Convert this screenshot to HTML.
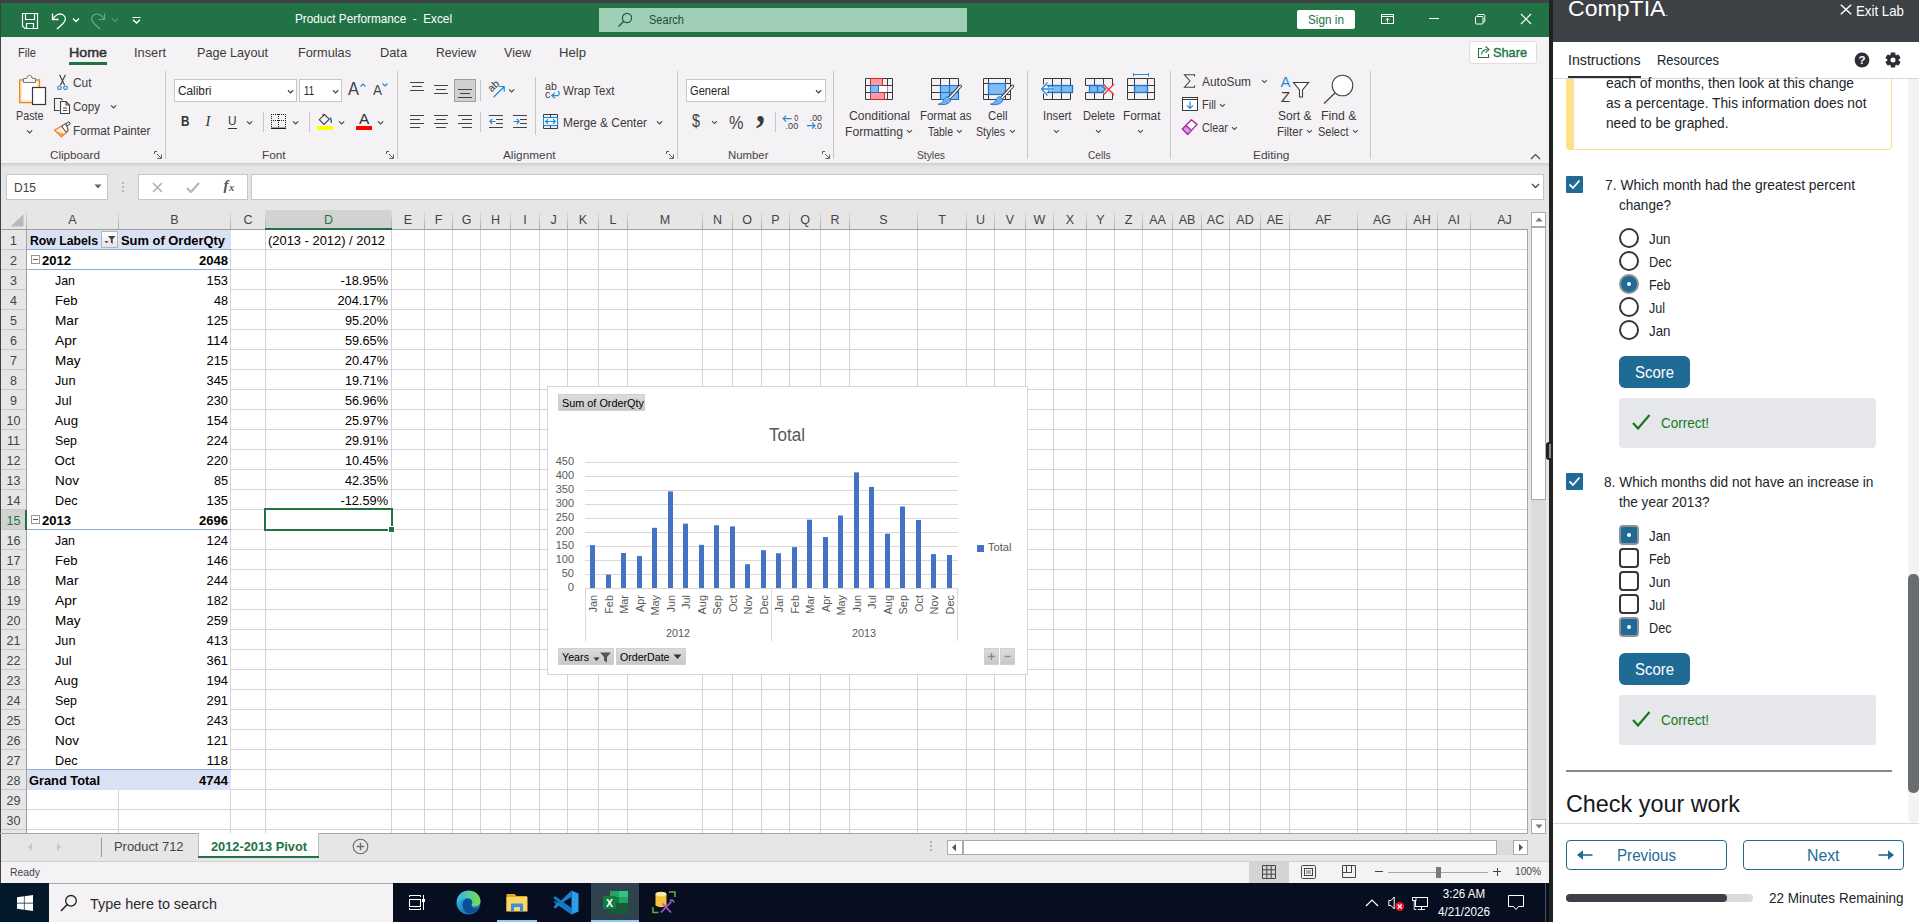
<!DOCTYPE html>
<html lang="en"><head><meta charset="utf-8"><title>Product Performance - Excel</title>
<style>
html,body{margin:0;padding:0;}
body{width:1919px;height:922px;overflow:hidden;background:#e6e6e6;position:relative;font-family:"Liberation Sans", sans-serif;}
.t{position:absolute;white-space:pre;line-height:1;font-family:"Liberation Sans", sans-serif;}
.b{position:absolute;box-sizing:border-box;display:block;}
svg text{font-family:"Liberation Sans", sans-serif;}
</style></head>
<body>
<div class="b" style="left:0px;top:0px;width:1553px;height:3px;background:#3f4245;"></div>
<div class="b" style="left:0px;top:3px;width:1px;height:880px;background:#3f4245;"></div>
<div class="b" style="left:1px;top:3px;width:1548px;height:34px;background:#217346;"></div>
<div class="b" style="left:1px;top:37px;width:1548px;height:126px;background:#f5f2f5;"></div>
<div class="b" style="left:1px;top:163px;width:1548px;height:5px;background:linear-gradient(#cfcdcf,#e2e1e2 60%,#e6e6e6);"></div>
<svg class="b" style="left:21px;top:12px;" width="18" height="18" viewBox="0 0 18 18"><path d="M1.5 1.5 H16.5 V16.5 H4 L1.5 14 Z M4.5 1.5 V7.5 H13.5 V1.5 M5.5 16.5 V11.5 H12.5 V16.5" fill="none" stroke="#ffffff" stroke-width="1.2"/></svg>
<svg class="b" style="left:50px;top:11px;" width="18" height="20" viewBox="0 0 18 20"><path d="M2.5 2.5 V8.5 H8.5 M2.8 8.2 C5 4 9 2 12.5 3.5 C16 5.5 16.5 9 13 12.5 L7 18" fill="none" stroke="#ffffff" stroke-width="1.3"/></svg>
<svg class="b" style="left:71.5px;top:16.5px;" width="8" height="6" viewBox="0 0 8 6"><path d="M1 1.5 L4 4.5 L7 1.5" fill="none" stroke="#ffffff" stroke-width="1.3"/></svg>
<svg class="b" style="left:89px;top:11px;" width="18" height="20" viewBox="0 0 18 20"><path d="M15.5 2.5 V8.5 H9.5 M15.2 8.2 C13 4 9 2 5.5 3.5 C2 5.5 1.5 9 5 12.5 L11 18" fill="none" stroke="#6fa888" stroke-width="1.2"/></svg>
<svg class="b" style="left:110.5px;top:16.5px;" width="8" height="6" viewBox="0 0 8 6"><path d="M1 1.5 L4 4.5 L7 1.5" fill="none" stroke="#5d9b78" stroke-width="1.1"/></svg>
<svg class="b" style="left:132px;top:16px;" width="9" height="8" viewBox="0 0 9 8"><path d="M0.5 1.5 H8.5" stroke="#ffffff" stroke-width="1"/><path d="M1 3.8 L4.5 7 L8 3.8" fill="none" stroke="#ffffff" stroke-width="1.4"/></svg>
<span class="t" id="t1" style="left:295.00px;top:11.90px;font-size:13px;color:#fff;transform:scaleX(0.9054);transform-origin:left center;">Product Performance  -  Excel</span>
<div class="b" style="left:599px;top:8px;width:368px;height:24px;background:#9fd0b7;"></div>
<svg class="b" style="left:617px;top:12px;" width="16" height="16" viewBox="0 0 16 16"><circle cx="10" cy="6" r="4.6" fill="none" stroke="#1e5c3a" stroke-width="1.2"/><path d="M6.8 9.2 L1.5 14.5" stroke="#1e5c3a" stroke-width="1.3"/></svg>
<span class="t" id="t2" style="left:649.00px;top:13.84px;font-size:12px;color:#1e4d33;transform:scaleX(0.9203);transform-origin:left center;">Search</span>
<div class="b" style="left:1297px;top:10px;width:58px;height:19px;background:#fff;border-radius:2px;"></div>
<span class="t" id="t3" style="left:1308.00px;top:13.20px;font-size:13px;color:#217346;transform:scaleX(0.9057);transform-origin:left center;">Sign in</span>
<svg class="b" style="left:1381px;top:14px;" width="14" height="11" viewBox="0 0 14 11"><rect x="0.5" y="0.5" width="12" height="9" fill="none" stroke="#fff" stroke-width="1"/><path d="M0.5 2.5 H12.5" stroke="#fff" stroke-width="1"/><path d="M6.5 8.5 V4.5 M4.5 6.3 L6.5 4.3 L8.5 6.3" fill="none" stroke="#fff" stroke-width="1"/></svg>
<div class="b" style="left:1429px;top:18px;width:10px;height:1px;background:#fff;"></div>
<svg class="b" style="left:1475px;top:14px;" width="11" height="11" viewBox="0 0 11 11"><rect x="0.5" y="2.5" width="7.5" height="7.5" rx="1" fill="none" stroke="#fff"/><path d="M2.5 2.5 V1.5 Q2.5 0.5 3.5 0.5 H8.8 Q9.8 0.5 9.8 1.5 V7 Q9.8 8 8.8 8 H8" fill="none" stroke="#fff"/></svg>
<svg class="b" style="left:1520px;top:13px;" width="12" height="12" viewBox="0 0 12 12"><path d="M1 1 L11 11 M11 1 L1 11" stroke="#fff" stroke-width="1.2"/></svg>
<span class="t" id="t4" style="left:18.00px;top:45.94px;font-size:13.3px;color:#3b3a39;transform:scaleX(0.8397);transform-origin:left center;">File</span>
<span class="t" id="t5" style="left:69.00px;top:45.94px;font-size:13.3px;color:#323130;transform:scaleX(1.0709);transform-origin:left center;-webkit-text-stroke:0.45px #323130;">Home</span>
<span class="t" id="t6" style="left:134.00px;top:45.94px;font-size:13.3px;color:#3b3a39;transform:scaleX(0.9620);transform-origin:left center;">Insert</span>
<span class="t" id="t7" style="left:197.00px;top:45.94px;font-size:13.3px;color:#3b3a39;transform:scaleX(0.9508);transform-origin:left center;">Page Layout</span>
<span class="t" id="t8" style="left:298.00px;top:45.94px;font-size:13.3px;color:#3b3a39;transform:scaleX(0.9563);transform-origin:left center;">Formulas</span>
<span class="t" id="t9" style="left:380.00px;top:45.94px;font-size:13.3px;color:#3b3a39;transform:scaleX(0.9611);transform-origin:left center;">Data</span>
<span class="t" id="t10" style="left:436.00px;top:45.94px;font-size:13.3px;color:#3b3a39;transform:scaleX(0.9172);transform-origin:left center;">Review</span>
<span class="t" id="t11" style="left:504.00px;top:45.94px;font-size:13.3px;color:#3b3a39;transform:scaleX(0.9443);transform-origin:left center;">View</span>
<span class="t" id="t12" style="left:559.00px;top:45.94px;font-size:13.3px;color:#3b3a39;transform:scaleX(0.9869);transform-origin:left center;">Help</span>
<div class="b" style="left:69px;top:62px;width:38px;height:3px;background:#217346;"></div>
<div class="b" style="left:1469px;top:40.5px;width:68px;height:23px;background:#fff;border:1px solid #e3dbdf;border-radius:3px;"></div>
<svg class="b" style="left:1477px;top:45px;" width="14" height="14" viewBox="0 0 14 14"><path d="M5 3.5 H1.5 V12.5 H11.5 V9" fill="none" stroke="#217346" stroke-width="1.1"/><path d="M4.5 9.5 C5 6 8 4.5 10.5 4.5 M8.5 1.5 L12 4.6 L8.5 7.5" fill="none" stroke="#217346" stroke-width="1.1"/></svg>
<span class="t" id="t13" style="left:1493.00px;top:45.74px;font-size:13.3px;color:#217346;transform:scaleX(0.9582);transform-origin:left center;-webkit-text-stroke:0.4px #217346;">Share</span>
<svg class="b" style="left:1530px;top:153px;" width="11" height="7" viewBox="0 0 11 7"><path d="M1 6 L5.5 1.5 L10 6" fill="none" stroke="#444" stroke-width="1.2"/></svg>
<div class="b" style="left:6px;top:174px;width:102px;height:26px;background:#fff;border:1px solid #c6c6c6;"></div>
<span class="t" id="t14" style="left:13.50px;top:181.72px;font-size:12.5px;color:#444;transform:scaleX(0.9591);transform-origin:left center;">D15</span>
<svg class="b" style="left:94px;top:184px;" width="8" height="5" viewBox="0 0 8 5"><path d="M0.5 0.5 H7.5 L4 4.5 Z" fill="#666"/></svg>
<div class="b" style="left:122px;top:181.7px;width:2px;height:2px;background:#a6a6a6;border-radius:1px;"></div>
<div class="b" style="left:122px;top:185.9px;width:2px;height:2px;background:#a6a6a6;border-radius:1px;"></div>
<div class="b" style="left:122px;top:190.2px;width:2px;height:2px;background:#a6a6a6;border-radius:1px;"></div>
<div class="b" style="left:138px;top:174px;width:110px;height:26px;background:#fff;border:1px solid #c6c6c6;"></div>
<svg class="b" style="left:152px;top:182px;" width="11" height="11" viewBox="0 0 11 11"><path d="M1 1 L10 10 M10 1 L1 10" stroke="#b0b0b0" stroke-width="1.6"/></svg>
<svg class="b" style="left:186px;top:182px;" width="14" height="11" viewBox="0 0 14 11"><path d="M1 6 L5 10 L13 1" fill="none" stroke="#b3b3b3" stroke-width="2.1"/></svg>
<span class="t" id="t15" style="left:223.50px;top:178.30px;font-size:15px;color:#555;font-weight:700;font-style:italic;font-family:'Liberation Serif',serif;">f</span>
<span class="t" id="t16" style="left:229.00px;top:182.61px;font-size:10.5px;color:#555;font-weight:700;font-style:italic;font-family:'Liberation Serif',serif;">x</span>
<div class="b" style="left:251px;top:174px;width:1293px;height:26px;background:#fff;border:1px solid #c6c6c6;"></div>
<svg class="b" style="left:1531px;top:183px;" width="9" height="6" viewBox="0 0 9 6"><path d="M1 1 L4.5 4.5 L8 1" fill="none" stroke="#555" stroke-width="1.5"/></svg>
<div class="b" style="left:165px;top:71px;width:1px;height:88px;background:#c8c6c4;"></div>
<div class="b" style="left:397px;top:71px;width:1px;height:88px;background:#c8c6c4;"></div>
<div class="b" style="left:677px;top:71px;width:1px;height:88px;background:#c8c6c4;"></div>
<div class="b" style="left:833px;top:71px;width:1px;height:88px;background:#c8c6c4;"></div>
<div class="b" style="left:1027px;top:71px;width:1px;height:88px;background:#c8c6c4;"></div>
<div class="b" style="left:1170px;top:71px;width:1px;height:88px;background:#c8c6c4;"></div>
<div class="b" style="left:1370px;top:71px;width:1px;height:88px;background:#c8c6c4;"></div>
<svg class="b" style="left:18px;top:74px;" width="30" height="32" viewBox="0 0 30 32"><rect x="1.8" y="6" width="19.5" height="22.5" fill="#fff" stroke="#ea8b1e" stroke-width="1.6"/><rect x="3.2" y="7.4" width="16.7" height="19.7" fill="none" stroke="#fde3b3" stroke-width="1.3"/><path d="M5.5 8.5 V4.5 H8.6 Q9 1.3 11.5 1.3 Q14 1.3 14.4 4.5 H17.5 V8.5 Z" fill="#f7f4f7" stroke="#797775" stroke-width="1"/><rect x="14.5" y="13.5" width="13" height="17" fill="#fff" stroke="#3b3a39" stroke-width="1.2"/></svg>
<span class="t" id="t17" style="left:16.10px;top:110.04px;font-size:12px;color:#3b3a39;transform:scaleX(0.8961);transform-origin:left center;">Paste</span>
<svg class="b" style="left:25.9px;top:128.9px;" width="7.2" height="5.2" viewBox="0 0 7.2 5.2"><path d="M1 1.3 L3.6 3.9 L6.2 1.3" fill="none" stroke="#444" stroke-width="1.1"/></svg>
<svg class="b" style="left:57px;top:74px;" width="11" height="17" viewBox="0 0 11 17"><path d="M2.6 0.8 L7.6 11.2 M8.4 0.8 L3.4 11.2" stroke="#3b3a39" stroke-width="1.1" fill="none"/><circle cx="2.5" cy="13.8" r="1.8" fill="none" stroke="#1e8bd8" stroke-width="1.2"/><circle cx="8.5" cy="13.8" r="1.8" fill="none" stroke="#1e8bd8" stroke-width="1.2"/></svg>
<span class="t" id="t18" style="left:72.80px;top:76.54px;font-size:12px;color:#3b3a39;transform:scaleX(0.9900);transform-origin:left center;">Cut</span>
<svg class="b" style="left:53px;top:97px;" width="18" height="18" viewBox="0 0 18 18"><path d="M6.5 13.5 H1.5 V1.5 H8 L9.5 3" fill="none" stroke="#444" stroke-width="1.1"/><path d="M7.5 4.5 H13 L16.5 8 V16.5 H7.5 Z M13 4.5 V8 H16.5" fill="#fff" stroke="#444" stroke-width="1.1"/><path d="M10 11 H14 M10 13.5 H14" stroke="#444" stroke-width="1"/></svg>
<span class="t" id="t19" style="left:72.80px;top:100.84px;font-size:12px;color:#3b3a39;transform:scaleX(0.9637);transform-origin:left center;">Copy</span>
<svg class="b" style="left:110.4px;top:103.9px;" width="7.2" height="5.2" viewBox="0 0 7.2 5.2"><path d="M1 1.3 L3.6 3.9 L6.2 1.3" fill="none" stroke="#444" stroke-width="1.1"/></svg>
<svg class="b" style="left:53px;top:121px;" width="19" height="18" viewBox="0 0 19 18"><path d="M1.5 9 L9 5 L14 11 L8.3 15.8 Z" fill="#fdebd6" stroke="#e8792d" stroke-width="1.2" stroke-linejoin="round"/><path d="M4.5 10.8 L11.3 12.8 L8.3 15.2 Z" fill="#f5a04a"/><path d="M8.5 5 L13 2.5 L15.3 9.5 L13 11 Z" fill="#fff" stroke="#3b3a39" stroke-width="1" stroke-linejoin="round"/><path d="M12.5 2.8 L16 0.8 L17.3 2.7 L14 4.8 Z" fill="#fff" stroke="#3b3a39" stroke-width="1" stroke-linejoin="round"/></svg>
<span class="t" id="t20" style="left:72.80px;top:124.64px;font-size:12px;color:#3b3a39;transform:scaleX(0.9766);transform-origin:left center;">Format Painter</span>
<span class="t" id="t21" style="left:49.50px;top:149.83px;font-size:11.3px;color:#444;transform:scaleX(1.0339);transform-origin:left center;">Clipboard</span>
<svg class="b" style="left:154px;top:151px;" width="8" height="8" viewBox="0 0 8 8"><path d="M0.5 3 V0.5 H3 M7.5 3.5 V7.5 H3.5 M3 3 L7 7" fill="none" stroke="#605e5c" stroke-width="1"/></svg>
<div class="b" style="left:174px;top:79px;width:123px;height:23px;background:#fff;border:1px solid #c8c6c4;"></div>
<div class="b" style="left:299px;top:79px;width:43px;height:23px;background:#fff;border:1px solid #c8c6c4;"></div>
<span class="t" id="t22" style="left:177.50px;top:85.02px;font-size:12.5px;color:#262626;transform:scaleX(0.9453);transform-origin:left center;">Calibri</span>
<span class="t" id="t23" style="left:303.50px;top:85.02px;font-size:12.5px;color:#262626;transform:scaleX(0.7702);transform-origin:left center;">11</span>
<svg class="b" style="left:286.9px;top:88.9px;" width="7.2" height="5.2" viewBox="0 0 7.2 5.2"><path d="M1 1.3 L3.6 3.9 L6.2 1.3" fill="none" stroke="#444" stroke-width="1.2"/></svg>
<svg class="b" style="left:331.9px;top:88.9px;" width="7.2" height="5.2" viewBox="0 0 7.2 5.2"><path d="M1 1.3 L3.6 3.9 L6.2 1.3" fill="none" stroke="#444" stroke-width="1.2"/></svg>
<span class="t" id="t24" style="left:348.00px;top:80.26px;font-size:18px;color:#444;transform:scaleX(0.9155);transform-origin:left center;">A</span>
<svg class="b" style="left:359.5px;top:83px;" width="6" height="4" viewBox="0 0 6 4"><path d="M0.5 3.5 L3 1 L5.5 3.5" fill="none" stroke="#1e8bd8" stroke-width="1.1"/></svg>
<span class="t" id="t25" style="left:373.00px;top:83.23px;font-size:14.5px;color:#444;transform:scaleX(0.9305);transform-origin:left center;">A</span>
<svg class="b" style="left:381.5px;top:83px;" width="6" height="4" viewBox="0 0 6 4"><path d="M0.5 0.5 L3 3 L5.5 0.5" fill="none" stroke="#1e8bd8" stroke-width="1.1"/></svg>
<span class="t" id="t26" style="left:181.00px;top:114.23px;font-size:14.5px;color:#323130;font-weight:700;transform:scaleX(0.8107);transform-origin:left center;">B</span>
<span class="t" id="t27" style="left:205.50px;top:114.23px;font-size:14.5px;color:#323130;font-style:italic;font-family:'Liberation Serif',serif;">I</span>
<span class="t" id="t28" style="left:228.00px;top:114.07px;font-size:13.5px;color:#323130;transform:scaleX(0.8718);transform-origin:left center;">U</span>
<div class="b" style="left:228px;top:127.5px;width:9px;height:1px;background:#323130;"></div>
<svg class="b" style="left:246.4px;top:119.9px;" width="7.2" height="5.2" viewBox="0 0 7.2 5.2"><path d="M1 1.3 L3.6 3.9 L6.2 1.3" fill="none" stroke="#444" stroke-width="1.1"/></svg>
<div class="b" style="left:263px;top:112px;width:1px;height:20px;background:#c8c6c4;"></div>
<svg class="b" style="left:271px;top:114px;" width="16" height="16" viewBox="0 0 16 16"><path d="M0 0.5 H15 M0.5 0 V13 M14.5 0 V13 M7.5 0 V13 M0 6.5 H15" stroke="#1b1b1b" stroke-width="1" stroke-dasharray="1 1" fill="none"/><path d="M0 14.3 H15" stroke="#111" stroke-width="1.3"/></svg>
<svg class="b" style="left:292.4px;top:119.9px;" width="7.2" height="5.2" viewBox="0 0 7.2 5.2"><path d="M1 1.3 L3.6 3.9 L6.2 1.3" fill="none" stroke="#444" stroke-width="1.1"/></svg>
<div class="b" style="left:309px;top:112px;width:1px;height:20px;background:#c8c6c4;"></div>
<svg class="b" style="left:317px;top:113px;" width="18" height="18" viewBox="0 0 18 18"><path d="M7.5 1.5 L12.2 6.2 L7 11.4 L2.3 6.7 Z M6 3 V0.8" fill="none" stroke="#444" stroke-width="1.1"/><path d="M12.8 4.5 Q15.3 7 14 10" fill="none" stroke="#1b6ec2" stroke-width="1.3"/><rect x="0" y="13" width="16" height="4" fill="#ffff00"/></svg>
<svg class="b" style="left:338.4px;top:119.9px;" width="7.2" height="5.2" viewBox="0 0 7.2 5.2"><path d="M1 1.3 L3.6 3.9 L6.2 1.3" fill="none" stroke="#444" stroke-width="1.1"/></svg>
<span class="t" id="t29" style="left:358.70px;top:112.23px;font-size:14.5px;color:#323130;transform:scaleX(1.0649);transform-origin:left center;">A</span>
<div class="b" style="left:356px;top:126px;width:16px;height:4px;background:#ff0000;"></div>
<svg class="b" style="left:377.4px;top:119.9px;" width="7.2" height="5.2" viewBox="0 0 7.2 5.2"><path d="M1 1.3 L3.6 3.9 L6.2 1.3" fill="none" stroke="#444" stroke-width="1.1"/></svg>
<span class="t" id="t30" style="left:261.50px;top:149.83px;font-size:11.3px;color:#444;transform:scaleX(1.0394);transform-origin:left center;">Font</span>
<svg class="b" style="left:386px;top:151px;" width="8" height="8" viewBox="0 0 8 8"><path d="M0.5 3 V0.5 H3 M7.5 3.5 V7.5 H3.5 M3 3 L7 7" fill="none" stroke="#605e5c" stroke-width="1"/></svg>
<div class="b" style="left:410px;top:82px;width:14px;height:1px;background:#444;"></div><div class="b" style="left:412px;top:86px;width:10px;height:1px;background:#444;"></div><div class="b" style="left:410px;top:90px;width:14px;height:1px;background:#444;"></div>
<div class="b" style="left:434px;top:85px;width:14px;height:1px;background:#444;"></div><div class="b" style="left:436px;top:89px;width:10px;height:1px;background:#444;"></div><div class="b" style="left:434px;top:93px;width:14px;height:1px;background:#444;"></div>
<div class="b" style="left:454px;top:79px;width:22px;height:23px;background:#d2d0ce;border:1px solid #a19f9d;"></div>
<div class="b" style="left:458px;top:89px;width:14px;height:1px;background:#444;"></div><div class="b" style="left:460px;top:93px;width:10px;height:1px;background:#444;"></div><div class="b" style="left:458px;top:97px;width:14px;height:1px;background:#444;"></div>
<div class="b" style="left:480px;top:80px;width:1px;height:21px;background:#c8c6c4;"></div>
<svg class="b" style="left:486px;top:79px;" width="20" height="20" viewBox="0 0 20 20"><text x="0" y="0" font-size="10.5" fill="#3b3a39" transform="translate(5.5 13.5) rotate(-42)">ab</text><path d="M7.5 18.2 L17.8 8 M13 7.5 H18.2 V12.7" fill="none" stroke="#1e8bd8" stroke-width="1.2"/></svg>
<svg class="b" style="left:507.9px;top:87.9px;" width="7.2" height="5.2" viewBox="0 0 7.2 5.2"><path d="M1 1.3 L3.6 3.9 L6.2 1.3" fill="none" stroke="#444" stroke-width="1.1"/></svg>
<div class="b" style="left:535px;top:77px;width:1px;height:58px;background:#c8c6c4;"></div>
<svg class="b" style="left:545px;top:80.7px;" width="16" height="19" viewBox="0 0 16 19"><text x="0" y="9" font-size="10.5" fill="#3b3a39" textLength="11.8" lengthAdjust="spacingAndGlyphs">ab</text><text x="0" y="16.8" font-size="10.5" fill="#3b3a39">c</text><path d="M13 10.3 Q15.5 12.5 13 14.6 H7 M9.8 12 L6.8 14.6 L9.8 17.2" fill="none" stroke="#1e8bd8" stroke-width="1.2"/></svg>
<span class="t" id="t31" style="left:562.50px;top:84.64px;font-size:12px;color:#3b3a39;transform:scaleX(0.9612);transform-origin:left center;">Wrap Text</span>
<div class="b" style="left:410px;top:115px;width:14px;height:1px;background:#444;"></div><div class="b" style="left:410px;top:119px;width:10px;height:1px;background:#444;"></div><div class="b" style="left:410px;top:123px;width:14px;height:1px;background:#444;"></div><div class="b" style="left:410px;top:127px;width:10px;height:1px;background:#444;"></div>
<div class="b" style="left:434px;top:115px;width:14px;height:1px;background:#444;"></div><div class="b" style="left:436px;top:119px;width:10px;height:1px;background:#444;"></div><div class="b" style="left:434px;top:123px;width:14px;height:1px;background:#444;"></div><div class="b" style="left:436px;top:127px;width:10px;height:1px;background:#444;"></div>
<div class="b" style="left:458px;top:115px;width:14px;height:1px;background:#444;"></div><div class="b" style="left:462px;top:119px;width:10px;height:1px;background:#444;"></div><div class="b" style="left:458px;top:123px;width:14px;height:1px;background:#444;"></div><div class="b" style="left:462px;top:127px;width:10px;height:1px;background:#444;"></div>
<div class="b" style="left:480px;top:112px;width:1px;height:20px;background:#c8c6c4;"></div>
<div class="b" style="left:489px;top:115px;width:14px;height:1px;background:#444;"></div><div class="b" style="left:496px;top:119px;width:7px;height:1px;background:#444;"></div><div class="b" style="left:496px;top:123px;width:7px;height:1px;background:#444;"></div><div class="b" style="left:489px;top:127px;width:14px;height:1px;background:#444;"></div>
<svg class="b" style="left:489px;top:118px;" width="7" height="7" viewBox="0 0 7 7"><path d="M6.5 3.5 H0.8 M3.2 1 L0.8 3.5 L3.2 6" fill="none" stroke="#1e8bd8" stroke-width="1.1"/></svg>
<div class="b" style="left:513px;top:115px;width:14px;height:1px;background:#444;"></div><div class="b" style="left:520px;top:119px;width:7px;height:1px;background:#444;"></div><div class="b" style="left:520px;top:123px;width:7px;height:1px;background:#444;"></div><div class="b" style="left:513px;top:127px;width:14px;height:1px;background:#444;"></div>
<svg class="b" style="left:513px;top:118px;" width="7" height="7" viewBox="0 0 7 7"><path d="M0.5 3.5 H6.2 M3.8 1 L6.2 3.5 L3.8 6" fill="none" stroke="#1e8bd8" stroke-width="1.1"/></svg>
<svg class="b" style="left:543px;top:114px;" width="16" height="16" viewBox="0 0 16 16"><path d="M0.5 0.5 H14.5 V14.5 H0.5 Z M7.5 0.5 V3.5 M7.5 11.5 V14.5" fill="none" stroke="#3b3a39" stroke-width="1"/><rect x="0.5" y="3.5" width="14" height="8" fill="#fff" stroke="#1e8bd8" stroke-width="1.2"/><path d="M2.7 7.5 H12.3 M5 5.2 L2.6 7.5 L5 9.8 M10 5.2 L12.4 7.5 L10 9.8" fill="none" stroke="#1e8bd8" stroke-width="1.2"/></svg>
<span class="t" id="t32" style="left:562.50px;top:117.14px;font-size:12px;color:#3b3a39;transform:scaleX(0.9917);transform-origin:left center;">Merge &amp; Center</span>
<svg class="b" style="left:656.4px;top:119.9px;" width="7.2" height="5.2" viewBox="0 0 7.2 5.2"><path d="M1 1.3 L3.6 3.9 L6.2 1.3" fill="none" stroke="#444" stroke-width="1.1"/></svg>
<span class="t" id="t33" style="left:503.00px;top:149.83px;font-size:11.3px;color:#444;transform:scaleX(1.0448);transform-origin:left center;">Alignment</span>
<svg class="b" style="left:666px;top:151px;" width="8" height="8" viewBox="0 0 8 8"><path d="M0.5 3 V0.5 H3 M7.5 3.5 V7.5 H3.5 M3 3 L7 7" fill="none" stroke="#605e5c" stroke-width="1"/></svg>
<div class="b" style="left:686px;top:79px;width:140px;height:23px;background:#fff;border:1px solid #c8c6c4;"></div>
<span class="t" id="t34" style="left:689.50px;top:85.02px;font-size:12.5px;color:#262626;transform:scaleX(0.8880);transform-origin:left center;">General</span>
<svg class="b" style="left:815.4px;top:88.9px;" width="7.2" height="5.2" viewBox="0 0 7.2 5.2"><path d="M1 1.3 L3.6 3.9 L6.2 1.3" fill="none" stroke="#444" stroke-width="1.2"/></svg>
<span class="t" id="t35" style="left:692.30px;top:112.26px;font-size:18.6px;color:#444;transform:scaleX(0.7734);transform-origin:left center;">$</span>
<svg class="b" style="left:710.6px;top:120.1px;" width="6.8" height="4.8" viewBox="0 0 6.8 4.8"><path d="M1 1.2 L3.4 3.6 L5.8 1.2" fill="none" stroke="#444" stroke-width="1.1"/></svg>
<span class="t" id="t36" style="left:728.50px;top:112.52px;font-size:19px;color:#444;transform:scaleX(0.8577);transform-origin:left center;">%</span>
<span class="t" id="t37" style="left:755.50px;top:89.14px;font-size:40px;color:#3b3a39;font-weight:700;transform:scaleX(0.9000);transform-origin:left center;font-family:'Liberation Serif',serif;">,</span>
<div class="b" style="left:775px;top:112px;width:1px;height:20px;background:#c8c6c4;"></div>
<svg class="b" style="left:782px;top:113px;" width="18" height="18" viewBox="0 0 18 18"><path d="M9.7 5.6 H1.2 M4.2 2.6 L1.2 5.6 L4.2 8.6" fill="none" stroke="#1e8bd8" stroke-width="1.2"/><text x="12.2" y="7.5" font-size="9.5" fill="#3b3a39" textLength="4" lengthAdjust="spacingAndGlyphs">0</text><text x="3.6" y="16.1" font-size="9.5" fill="#3b3a39" textLength="12.6" lengthAdjust="spacingAndGlyphs">.00</text></svg>
<svg class="b" style="left:806px;top:113px;" width="18" height="18" viewBox="0 0 18 18"><text x="3.8" y="7.5" font-size="9.5" fill="#3b3a39" textLength="12" lengthAdjust="spacingAndGlyphs">.00</text><path d="M1 12.7 H9 M6 9.7 L9 12.7 L6 15.7" fill="none" stroke="#1e8bd8" stroke-width="1.2"/><text x="8.6" y="16.1" font-size="9.5" fill="#3b3a39" textLength="7.3" lengthAdjust="spacingAndGlyphs">.0</text></svg>
<span class="t" id="t38" style="left:727.50px;top:149.83px;font-size:11.3px;color:#444;transform:scaleX(1.0078);transform-origin:left center;">Number</span>
<svg class="b" style="left:822px;top:151px;" width="8" height="8" viewBox="0 0 8 8"><path d="M0.5 3 V0.5 H3 M7.5 3.5 V7.5 H3.5 M3 3 L7 7" fill="none" stroke="#605e5c" stroke-width="1"/></svg>
<svg class="b" style="left:865px;top:78px;" width="29" height="23" viewBox="0 0 29 23"><path d="M0.5 0.5 H27.5 V21.5 H0.5 Z M0.5 7.5 H27.5 M0.5 14.5 H27.5 M22.5 0.5 V21.5" fill="none" stroke="#3b3a39" stroke-width="1"/><rect x="13.5" y="8" width="9" height="6" fill="#fff"/><rect x="5.5" y="0.5" width="12" height="7" fill="#fb9aa6" stroke="#e0261a" stroke-width="1"/><rect x="5.5" y="14.5" width="14" height="7" fill="#fb9aa6" stroke="#e0261a" stroke-width="1"/><rect x="5.5" y="7.5" width="8" height="7" fill="#7fbaf0" stroke="#1b75d0" stroke-width="1"/></svg>
<span class="t" id="t39" style="left:848.50px;top:110.24px;font-size:12px;color:#3b3a39;transform:scaleX(1.0159);transform-origin:left center;">Conditional</span>
<span class="t" id="t40" style="left:844.50px;top:125.84px;font-size:12px;color:#3b3a39;transform:scaleX(1.0112);transform-origin:left center;">Formatting</span>
<svg class="b" style="left:906.1px;top:129.1px;" width="6.8" height="4.8" viewBox="0 0 6.8 4.8"><path d="M1 1.2 L3.4 3.6 L5.8 1.2" fill="none" stroke="#444" stroke-width="1.1"/></svg>
<svg class="b" style="left:931px;top:78px;" width="34" height="29" viewBox="0 0 34 29"><rect x="9.5" y="7.5" width="18" height="14" fill="#7fbaf0"/><path d="M0.5 0.5 H27.5 V21.5 H0.5 Z M0.5 7.5 H27.5 M0.5 14.5 H27.5 M9.5 0.5 V21.5 M18.5 0.5 V21.5" fill="none" stroke="#3b3a39" stroke-width="1"/><path d="M9.5 21.5 V7.5 H27.5 M9.5 14.5 H27.5 M18.5 7.5 V21.5 M27.5 7.5 V21.5 M9.5 21.5 H27.5" fill="none" stroke="#1b75d0" stroke-width="1.2"/><path d="M29.3 8.2 L18.2 20.2" stroke="#3b3a39" stroke-width="3.4" stroke-linecap="round"/><path d="M29.3 8.2 L18.5 19.9" stroke="#fff" stroke-width="1.5" stroke-linecap="round"/><path d="M16.5 18.7 L19.8 21.8 C19.2 25.2 14.2 27.8 7.2 26.2 C10.2 25.8 12.2 23.6 12.6 21.8 C13.2 19.9 15.2 18.4 16.5 18.7 Z" fill="#6eb1ee" stroke="#1b75d0" stroke-width="0.9"/></svg>
<span class="t" id="t41" style="left:919.50px;top:110.24px;font-size:12px;color:#3b3a39;transform:scaleX(0.9534);transform-origin:left center;">Format as</span>
<span class="t" id="t42" style="left:927.50px;top:125.84px;font-size:12px;color:#3b3a39;transform:scaleX(0.8715);transform-origin:left center;">Table</span>
<svg class="b" style="left:955.6px;top:129.1px;" width="6.8" height="4.8" viewBox="0 0 6.8 4.8"><path d="M1 1.2 L3.4 3.6 L5.8 1.2" fill="none" stroke="#444" stroke-width="1.1"/></svg>
<svg class="b" style="left:983px;top:78px;" width="34" height="29" viewBox="0 0 34 29"><path d="M0.5 0.5 H27.5 V21.5 H0.5 Z M0.5 5.5 H27.5 M0.5 16.5 H27.5 M5.5 0.5 V21.5 M22.5 0.5 V21.5" fill="none" stroke="#3b3a39" stroke-width="1"/><rect x="5.5" y="5.5" width="17" height="11" fill="#7fbaf0" stroke="#1b75d0" stroke-width="1.2"/><path d="M29.5 8.2 L18.4 20.2" stroke="#3b3a39" stroke-width="3.4" stroke-linecap="round"/><path d="M29.5 8.2 L18.7 19.9" stroke="#fff" stroke-width="1.5" stroke-linecap="round"/><path d="M16.7 18.7 L20 21.8 C19.4 25.2 14.4 27.8 7.4 26.2 C10.4 25.8 12.4 23.6 12.8 21.8 C13.4 19.9 15.4 18.4 16.7 18.7 Z" fill="#6eb1ee" stroke="#1b75d0" stroke-width="0.9"/></svg>
<span class="t" id="t43" style="left:987.50px;top:110.24px;font-size:12px;color:#3b3a39;transform:scaleX(0.9433);transform-origin:left center;">Cell</span>
<span class="t" id="t44" style="left:976.00px;top:125.84px;font-size:12px;color:#3b3a39;transform:scaleX(0.8872);transform-origin:left center;">Styles</span>
<svg class="b" style="left:1008.6px;top:129.1px;" width="6.8" height="4.8" viewBox="0 0 6.8 4.8"><path d="M1 1.2 L3.4 3.6 L5.8 1.2" fill="none" stroke="#444" stroke-width="1.1"/></svg>
<span class="t" id="t45" style="left:916.50px;top:149.83px;font-size:11.3px;color:#444;transform:scaleX(0.9101);transform-origin:left center;">Styles</span>
<svg class="b" style="left:1040px;top:78px;" width="34" height="22" viewBox="0 0 34 22"><path d="M3.5 7.5 V0.5 H30.5 V21.5 H3.5 V14.5 M12.5 0.5 V21.5 M21.5 0.5 V21.5 M3.5 7.5 H30.5 M3.5 14.5 H30.5" fill="none" stroke="#3b3a39" stroke-width="1"/><rect x="8.5" y="7.5" width="24" height="7" fill="#7fbaf0" stroke="#1b75d0" stroke-width="1.3"/><path d="M12.5 7.5 V14.5 M21.5 7.5 V14.5" stroke="#1b75d0" stroke-width="1.2"/><path d="M14 11 H2.5 M7.5 4.5 L1.5 11 L7.5 17.5" fill="none" stroke="#fff" stroke-width="3.2"/><path d="M14 11 H2.5 M7.5 4.5 L1.5 11 L7.5 17.5" fill="none" stroke="#1e8bd8" stroke-width="1.3"/></svg>
<span class="t" id="t46" style="left:1042.50px;top:110.14px;font-size:12px;color:#3b3a39;transform:scaleX(0.9495);transform-origin:left center;">Insert</span>
<svg class="b" style="left:1053.1px;top:129.1px;" width="6.8" height="4.8" viewBox="0 0 6.8 4.8"><path d="M1 1.2 L3.4 3.6 L5.8 1.2" fill="none" stroke="#444" stroke-width="1.1"/></svg>
<svg class="b" style="left:1084px;top:78px;" width="32" height="22" viewBox="0 0 32 22"><path d="M1.5 7.5 V0.5 H28.5 V7.5 M28.5 14.5 V21.5 H1.5 V14.5 M10.5 0.5 V21.5 M19.5 0.5 V6.5 M19.5 15.5 V21.5 M1.5 7.5 H19.5 M1.5 14.5 H19.5" fill="none" stroke="#3b3a39" stroke-width="1"/><path d="M5.5 7.5 H18 L21.5 11 L18 14.5 H5.5 Z" fill="#7fbaf0" stroke="#1b75d0" stroke-width="1.3"/><path d="M13.5 7.5 V14.5" stroke="#1b75d0" stroke-width="1.2"/><path d="M19.3 6 L30 17 M30 6 L19.3 17" stroke="#f03e36" stroke-width="1.4"/></svg>
<span class="t" id="t47" style="left:1082.50px;top:110.14px;font-size:12px;color:#3b3a39;transform:scaleX(0.9225);transform-origin:left center;">Delete</span>
<svg class="b" style="left:1095.1px;top:129.1px;" width="6.8" height="4.8" viewBox="0 0 6.8 4.8"><path d="M1 1.2 L3.4 3.6 L5.8 1.2" fill="none" stroke="#444" stroke-width="1.1"/></svg>
<svg class="b" style="left:1126px;top:72px;" width="30" height="28" viewBox="0 0 30 28"><path d="M7.5 1 V4.5 M7.5 2.5 H22.5 M22.5 1 V4.5" fill="none" stroke="#1e8bd8" stroke-width="1"/><path d="M1.5 6.5 H28.5 V27.5 H1.5 Z M1.5 13.5 H28.5 M1.5 20.5 H28.5 M8.5 6.5 V27.5 M21.5 6.5 V27.5" fill="none" stroke="#3b3a39" stroke-width="1"/><rect x="8.5" y="13.5" width="13" height="7" fill="#7fbaf0" stroke="#1b75d0" stroke-width="1.3"/></svg>
<span class="t" id="t48" style="left:1122.50px;top:110.14px;font-size:12px;color:#3b3a39;transform:scaleX(0.9864);transform-origin:left center;">Format</span>
<svg class="b" style="left:1137.1px;top:129.1px;" width="6.8" height="4.8" viewBox="0 0 6.8 4.8"><path d="M1 1.2 L3.4 3.6 L5.8 1.2" fill="none" stroke="#444" stroke-width="1.1"/></svg>
<span class="t" id="t49" style="left:1087.50px;top:149.83px;font-size:11.3px;color:#444;transform:scaleX(0.8961);transform-origin:left center;">Cells</span>
<svg class="b" style="left:1183px;top:74px;" width="13" height="14" viewBox="0 0 13 14"><path d="M11.5 2.5 V0.8 H1.5 L7 7 L1.5 13.2 H11.5 V11.5" fill="none" stroke="#444" stroke-width="1.1"/></svg>
<span class="t" id="t50" style="left:1201.50px;top:75.84px;font-size:12px;color:#3b3a39;transform:scaleX(0.9927);transform-origin:left center;">AutoSum</span>
<svg class="b" style="left:1261.1px;top:79.1px;" width="6.8" height="4.8" viewBox="0 0 6.8 4.8"><path d="M1 1.2 L3.4 3.6 L5.8 1.2" fill="none" stroke="#444" stroke-width="1.1"/></svg>
<svg class="b" style="left:1182px;top:97px;" width="17" height="15" viewBox="0 0 17 15"><rect x="0.5" y="0.5" width="15" height="13" fill="#fff" stroke="#3b3a39" stroke-width="1"/><path d="M0.5 2.5 H15.5" stroke="#3b3a39" stroke-width="1"/><path d="M8 4.5 V11.3 M5 8.3 L8 11.3 L11 8.3" fill="none" stroke="#1e8bd8" stroke-width="1.2"/></svg>
<span class="t" id="t51" style="left:1201.50px;top:99.34px;font-size:12px;color:#3b3a39;transform:scaleX(0.9134);transform-origin:left center;">Fill</span>
<svg class="b" style="left:1219.1px;top:102.6px;" width="6.8" height="4.8" viewBox="0 0 6.8 4.8"><path d="M1 1.2 L3.4 3.6 L5.8 1.2" fill="none" stroke="#444" stroke-width="1.1"/></svg>
<svg class="b" style="left:1181px;top:119px;" width="18" height="17" viewBox="0 0 18 17"><path d="M10.4 0.8 L16 5.4 L6.7 15.6 L1.4 10 Z" fill="#fff"/><path d="M4.9 6.3 L10.6 11.6 L6.7 15.6 L1.4 10 Z" fill="#dc9ae3"/><path d="M10.4 0.8 L16 5.4 L6.7 15.6 L1.4 10 Z M4.9 6.3 L10.6 11.6" fill="none" stroke="#a32aa8" stroke-width="1.4" stroke-linejoin="round"/></svg>
<span class="t" id="t52" style="left:1201.50px;top:122.14px;font-size:12px;color:#3b3a39;transform:scaleX(0.9063);transform-origin:left center;">Clear</span>
<svg class="b" style="left:1231.1px;top:125.6px;" width="6.8" height="4.8" viewBox="0 0 6.8 4.8"><path d="M1 1.2 L3.4 3.6 L5.8 1.2" fill="none" stroke="#444" stroke-width="1.1"/></svg>
<svg class="b" style="left:1280px;top:74px;" width="30" height="29" viewBox="0 0 30 29"><text x="0.6" y="13.3" font-size="15" fill="#1e8bd8">A</text><text x="1" y="27.6" font-size="15" fill="#3b3a39">Z</text><path d="M13.5 8.5 H28.5 L22.5 16 V23 H19.5 V16 Z" fill="#fff" stroke="#3b3a39" stroke-width="1.1"/></svg>
<span class="t" id="t53" style="left:1278.00px;top:110.14px;font-size:12px;color:#3b3a39;transform:scaleX(1.0042);transform-origin:left center;">Sort &amp;</span>
<span class="t" id="t54" style="left:1276.50px;top:125.84px;font-size:12px;color:#3b3a39;transform:scaleX(0.9561);transform-origin:left center;">Filter</span>
<svg class="b" style="left:1305.6px;top:129.1px;" width="6.8" height="4.8" viewBox="0 0 6.8 4.8"><path d="M1 1.2 L3.4 3.6 L5.8 1.2" fill="none" stroke="#444" stroke-width="1.1"/></svg>
<svg class="b" style="left:1323px;top:74px;" width="31" height="30" viewBox="0 0 31 30"><circle cx="19.5" cy="11.5" r="10.3" fill="#fff" stroke="#444" stroke-width="1.1"/><path d="M12 19 L1 29.5" stroke="#444" stroke-width="1.2"/></svg>
<span class="t" id="t55" style="left:1321.00px;top:110.14px;font-size:12px;color:#3b3a39;transform:scaleX(1.0234);transform-origin:left center;">Find &amp;</span>
<span class="t" id="t56" style="left:1318.00px;top:125.84px;font-size:12px;color:#3b3a39;transform:scaleX(0.9143);transform-origin:left center;">Select</span>
<svg class="b" style="left:1352.1px;top:129.1px;" width="6.8" height="4.8" viewBox="0 0 6.8 4.8"><path d="M1 1.2 L3.4 3.6 L5.8 1.2" fill="none" stroke="#444" stroke-width="1.1"/></svg>
<span class="t" id="t57" style="left:1252.50px;top:149.83px;font-size:11.3px;color:#444;transform:scaleX(1.0565);transform-origin:left center;">Editing</span>
<div class="b" style="left:27px;top:230px;width:1501px;height:603px;background:#fff;"></div>
<svg class="b" style="left:0px;top:0px;" width="1530" height="834" viewBox="0 0 1530 834"><path d="M27 249.5 H1527 M27 269.5 H1527 M27 289.5 H1527 M27 309.5 H1527 M27 329.5 H1527 M27 349.5 H1527 M27 369.5 H1527 M27 389.5 H1527 M27 409.5 H1527 M27 429.5 H1527 M27 449.5 H1527 M27 469.5 H1527 M27 489.5 H1527 M27 509.5 H1527 M27 529.5 H1527 M27 549.5 H1527 M27 569.5 H1527 M27 589.5 H1527 M27 609.5 H1527 M27 629.5 H1527 M27 649.5 H1527 M27 669.5 H1527 M27 689.5 H1527 M27 709.5 H1527 M27 729.5 H1527 M27 749.5 H1527 M27 769.5 H1527 M27 789.5 H1527 M27 809.5 H1527 M27 829.5 H1527 M118.5 230 V833 M230.5 230 V833 M265.5 230 V833 M391.5 230 V833 M424.5 230 V833 M452.5 230 V833 M480.5 230 V833 M510.5 230 V833 M539.5 230 V833 M567.5 230 V833 M598.5 230 V833 M627.5 230 V833 M702.5 230 V833 M732.5 230 V833 M761.5 230 V833 M789.5 230 V833 M820.5 230 V833 M849.5 230 V833 M917.5 230 V833 M966.5 230 V833 M994.5 230 V833 M1025.5 230 V833 M1053.5 230 V833 M1086.5 230 V833 M1114.5 230 V833 M1142.5 230 V833 M1172.5 230 V833 M1201.5 230 V833 M1229.5 230 V833 M1260.5 230 V833 M1289.5 230 V833 M1357.5 230 V833 M1406.5 230 V833 M1437.5 230 V833 M1470.5 230 V833" stroke="#d4d4d4" stroke-width="1" fill="none" shape-rendering="crispEdges"/></svg>
<div class="b" style="left:1527px;top:229px;width:1px;height:604px;background:#a6a6a6;"></div>
<div class="b" style="left:0px;top:833px;width:1528px;height:1px;background:#a6a6a6;"></div>
<div class="b" style="left:265px;top:210px;width:127px;height:20px;background:#d2d2d2;"></div>
<span class="t" id="t58" style="left:72.50px;top:214.02px;font-size:12.5px;color:#444;transform:translateX(-50%);transform-origin:center center;">A</span>
<span class="t" id="t59" style="left:174.50px;top:214.02px;font-size:12.5px;color:#444;transform:translateX(-50%);transform-origin:center center;">B</span>
<span class="t" id="t60" style="left:248.00px;top:214.02px;font-size:12.5px;color:#444;transform:translateX(-50%);transform-origin:center center;">C</span>
<span class="t" id="t61" style="left:328.50px;top:214.02px;font-size:12.5px;color:#217346;transform:translateX(-50%);transform-origin:center center;">D</span>
<span class="t" id="t62" style="left:408.00px;top:214.02px;font-size:12.5px;color:#444;transform:translateX(-50%);transform-origin:center center;">E</span>
<span class="t" id="t63" style="left:438.50px;top:214.02px;font-size:12.5px;color:#444;transform:translateX(-50%);transform-origin:center center;">F</span>
<span class="t" id="t64" style="left:466.50px;top:214.02px;font-size:12.5px;color:#444;transform:translateX(-50%);transform-origin:center center;">G</span>
<span class="t" id="t65" style="left:495.50px;top:214.02px;font-size:12.5px;color:#444;transform:translateX(-50%);transform-origin:center center;">H</span>
<span class="t" id="t66" style="left:525.00px;top:214.02px;font-size:12.5px;color:#444;transform:translateX(-50%);transform-origin:center center;">I</span>
<span class="t" id="t67" style="left:553.50px;top:214.02px;font-size:12.5px;color:#444;transform:translateX(-50%);transform-origin:center center;">J</span>
<span class="t" id="t68" style="left:583.00px;top:214.02px;font-size:12.5px;color:#444;transform:translateX(-50%);transform-origin:center center;">K</span>
<span class="t" id="t69" style="left:613.00px;top:214.02px;font-size:12.5px;color:#444;transform:translateX(-50%);transform-origin:center center;">L</span>
<span class="t" id="t70" style="left:665.00px;top:214.02px;font-size:12.5px;color:#444;transform:translateX(-50%);transform-origin:center center;">M</span>
<span class="t" id="t71" style="left:717.50px;top:214.02px;font-size:12.5px;color:#444;transform:translateX(-50%);transform-origin:center center;">N</span>
<span class="t" id="t72" style="left:747.00px;top:214.02px;font-size:12.5px;color:#444;transform:translateX(-50%);transform-origin:center center;">O</span>
<span class="t" id="t73" style="left:775.50px;top:214.02px;font-size:12.5px;color:#444;transform:translateX(-50%);transform-origin:center center;">P</span>
<span class="t" id="t74" style="left:805.00px;top:214.02px;font-size:12.5px;color:#444;transform:translateX(-50%);transform-origin:center center;">Q</span>
<span class="t" id="t75" style="left:835.00px;top:214.02px;font-size:12.5px;color:#444;transform:translateX(-50%);transform-origin:center center;">R</span>
<span class="t" id="t76" style="left:883.50px;top:214.02px;font-size:12.5px;color:#444;transform:translateX(-50%);transform-origin:center center;">S</span>
<span class="t" id="t77" style="left:942.00px;top:214.02px;font-size:12.5px;color:#444;transform:translateX(-50%);transform-origin:center center;">T</span>
<span class="t" id="t78" style="left:980.50px;top:214.02px;font-size:12.5px;color:#444;transform:translateX(-50%);transform-origin:center center;">U</span>
<span class="t" id="t79" style="left:1010.00px;top:214.02px;font-size:12.5px;color:#444;transform:translateX(-50%);transform-origin:center center;">V</span>
<span class="t" id="t80" style="left:1039.50px;top:214.02px;font-size:12.5px;color:#444;transform:translateX(-50%);transform-origin:center center;">W</span>
<span class="t" id="t81" style="left:1070.00px;top:214.02px;font-size:12.5px;color:#444;transform:translateX(-50%);transform-origin:center center;">X</span>
<span class="t" id="t82" style="left:1100.50px;top:214.02px;font-size:12.5px;color:#444;transform:translateX(-50%);transform-origin:center center;">Y</span>
<span class="t" id="t83" style="left:1128.50px;top:214.02px;font-size:12.5px;color:#444;transform:translateX(-50%);transform-origin:center center;">Z</span>
<span class="t" id="t84" style="left:1157.50px;top:214.02px;font-size:12.5px;color:#444;transform:translateX(-50%);transform-origin:center center;">AA</span>
<span class="t" id="t85" style="left:1187.00px;top:214.02px;font-size:12.5px;color:#444;transform:translateX(-50%);transform-origin:center center;">AB</span>
<span class="t" id="t86" style="left:1215.50px;top:214.02px;font-size:12.5px;color:#444;transform:translateX(-50%);transform-origin:center center;">AC</span>
<span class="t" id="t87" style="left:1245.00px;top:214.02px;font-size:12.5px;color:#444;transform:translateX(-50%);transform-origin:center center;">AD</span>
<span class="t" id="t88" style="left:1275.00px;top:214.02px;font-size:12.5px;color:#444;transform:translateX(-50%);transform-origin:center center;">AE</span>
<span class="t" id="t89" style="left:1323.50px;top:214.02px;font-size:12.5px;color:#444;transform:translateX(-50%);transform-origin:center center;">AF</span>
<span class="t" id="t90" style="left:1382.00px;top:214.02px;font-size:12.5px;color:#444;transform:translateX(-50%);transform-origin:center center;">AG</span>
<span class="t" id="t91" style="left:1422.00px;top:214.02px;font-size:12.5px;color:#444;transform:translateX(-50%);transform-origin:center center;">AH</span>
<span class="t" id="t92" style="left:1454.00px;top:214.02px;font-size:12.5px;color:#444;transform:translateX(-50%);transform-origin:center center;">AI</span>
<span class="t" id="t93" style="left:1504.50px;top:214.02px;font-size:12.5px;color:#444;transform:translateX(-50%);transform-origin:center center;">AJ</span>
<div class="b" style="left:26px;top:211px;width:1px;height:19px;background:linear-gradient(#e0e0e0,#a9a9a9);"></div>
<div class="b" style="left:118px;top:211px;width:1px;height:19px;background:linear-gradient(#e0e0e0,#a9a9a9);"></div>
<div class="b" style="left:230px;top:211px;width:1px;height:19px;background:linear-gradient(#e0e0e0,#a9a9a9);"></div>
<div class="b" style="left:265px;top:211px;width:1px;height:19px;background:linear-gradient(#e0e0e0,#a9a9a9);"></div>
<div class="b" style="left:391px;top:211px;width:1px;height:19px;background:linear-gradient(#e0e0e0,#a9a9a9);"></div>
<div class="b" style="left:424px;top:211px;width:1px;height:19px;background:linear-gradient(#e0e0e0,#a9a9a9);"></div>
<div class="b" style="left:452px;top:211px;width:1px;height:19px;background:linear-gradient(#e0e0e0,#a9a9a9);"></div>
<div class="b" style="left:480px;top:211px;width:1px;height:19px;background:linear-gradient(#e0e0e0,#a9a9a9);"></div>
<div class="b" style="left:510px;top:211px;width:1px;height:19px;background:linear-gradient(#e0e0e0,#a9a9a9);"></div>
<div class="b" style="left:539px;top:211px;width:1px;height:19px;background:linear-gradient(#e0e0e0,#a9a9a9);"></div>
<div class="b" style="left:567px;top:211px;width:1px;height:19px;background:linear-gradient(#e0e0e0,#a9a9a9);"></div>
<div class="b" style="left:598px;top:211px;width:1px;height:19px;background:linear-gradient(#e0e0e0,#a9a9a9);"></div>
<div class="b" style="left:627px;top:211px;width:1px;height:19px;background:linear-gradient(#e0e0e0,#a9a9a9);"></div>
<div class="b" style="left:702px;top:211px;width:1px;height:19px;background:linear-gradient(#e0e0e0,#a9a9a9);"></div>
<div class="b" style="left:732px;top:211px;width:1px;height:19px;background:linear-gradient(#e0e0e0,#a9a9a9);"></div>
<div class="b" style="left:761px;top:211px;width:1px;height:19px;background:linear-gradient(#e0e0e0,#a9a9a9);"></div>
<div class="b" style="left:789px;top:211px;width:1px;height:19px;background:linear-gradient(#e0e0e0,#a9a9a9);"></div>
<div class="b" style="left:820px;top:211px;width:1px;height:19px;background:linear-gradient(#e0e0e0,#a9a9a9);"></div>
<div class="b" style="left:849px;top:211px;width:1px;height:19px;background:linear-gradient(#e0e0e0,#a9a9a9);"></div>
<div class="b" style="left:917px;top:211px;width:1px;height:19px;background:linear-gradient(#e0e0e0,#a9a9a9);"></div>
<div class="b" style="left:966px;top:211px;width:1px;height:19px;background:linear-gradient(#e0e0e0,#a9a9a9);"></div>
<div class="b" style="left:994px;top:211px;width:1px;height:19px;background:linear-gradient(#e0e0e0,#a9a9a9);"></div>
<div class="b" style="left:1025px;top:211px;width:1px;height:19px;background:linear-gradient(#e0e0e0,#a9a9a9);"></div>
<div class="b" style="left:1053px;top:211px;width:1px;height:19px;background:linear-gradient(#e0e0e0,#a9a9a9);"></div>
<div class="b" style="left:1086px;top:211px;width:1px;height:19px;background:linear-gradient(#e0e0e0,#a9a9a9);"></div>
<div class="b" style="left:1114px;top:211px;width:1px;height:19px;background:linear-gradient(#e0e0e0,#a9a9a9);"></div>
<div class="b" style="left:1142px;top:211px;width:1px;height:19px;background:linear-gradient(#e0e0e0,#a9a9a9);"></div>
<div class="b" style="left:1172px;top:211px;width:1px;height:19px;background:linear-gradient(#e0e0e0,#a9a9a9);"></div>
<div class="b" style="left:1201px;top:211px;width:1px;height:19px;background:linear-gradient(#e0e0e0,#a9a9a9);"></div>
<div class="b" style="left:1229px;top:211px;width:1px;height:19px;background:linear-gradient(#e0e0e0,#a9a9a9);"></div>
<div class="b" style="left:1260px;top:211px;width:1px;height:19px;background:linear-gradient(#e0e0e0,#a9a9a9);"></div>
<div class="b" style="left:1289px;top:211px;width:1px;height:19px;background:linear-gradient(#e0e0e0,#a9a9a9);"></div>
<div class="b" style="left:1357px;top:211px;width:1px;height:19px;background:linear-gradient(#e0e0e0,#a9a9a9);"></div>
<div class="b" style="left:1406px;top:211px;width:1px;height:19px;background:linear-gradient(#e0e0e0,#a9a9a9);"></div>
<div class="b" style="left:1437px;top:211px;width:1px;height:19px;background:linear-gradient(#e0e0e0,#a9a9a9);"></div>
<div class="b" style="left:1470px;top:211px;width:1px;height:19px;background:linear-gradient(#e0e0e0,#a9a9a9);"></div>
<div class="b" style="left:1px;top:229px;width:1527px;height:1px;background:#a0a0a0;"></div>
<div class="b" style="left:265px;top:228px;width:127px;height:2px;background:#217346;"></div>
<svg class="b" style="left:10px;top:214px;" width="14" height="13" viewBox="0 0 14 13"><path d="M13.5 0.5 V12.5 H0.5 Z" fill="#b8b8b8"/></svg>
<div class="b" style="left:1px;top:510px;width:25px;height:20px;background:#d2d2d2;"></div>
<span class="t" id="t94" style="left:13.50px;top:235.22px;font-size:12.5px;color:#444;transform:translateX(-50%);transform-origin:center center;">1</span>
<div class="b" style="left:1px;top:249px;width:25px;height:1px;background:#c9c9c9;"></div>
<span class="t" id="t95" style="left:13.50px;top:255.22px;font-size:12.5px;color:#444;transform:translateX(-50%);transform-origin:center center;">2</span>
<div class="b" style="left:1px;top:269px;width:25px;height:1px;background:#c9c9c9;"></div>
<span class="t" id="t96" style="left:13.50px;top:275.22px;font-size:12.5px;color:#444;transform:translateX(-50%);transform-origin:center center;">3</span>
<div class="b" style="left:1px;top:289px;width:25px;height:1px;background:#c9c9c9;"></div>
<span class="t" id="t97" style="left:13.50px;top:295.22px;font-size:12.5px;color:#444;transform:translateX(-50%);transform-origin:center center;">4</span>
<div class="b" style="left:1px;top:309px;width:25px;height:1px;background:#c9c9c9;"></div>
<span class="t" id="t98" style="left:13.50px;top:315.22px;font-size:12.5px;color:#444;transform:translateX(-50%);transform-origin:center center;">5</span>
<div class="b" style="left:1px;top:329px;width:25px;height:1px;background:#c9c9c9;"></div>
<span class="t" id="t99" style="left:13.50px;top:335.22px;font-size:12.5px;color:#444;transform:translateX(-50%);transform-origin:center center;">6</span>
<div class="b" style="left:1px;top:349px;width:25px;height:1px;background:#c9c9c9;"></div>
<span class="t" id="t100" style="left:13.50px;top:355.22px;font-size:12.5px;color:#444;transform:translateX(-50%);transform-origin:center center;">7</span>
<div class="b" style="left:1px;top:369px;width:25px;height:1px;background:#c9c9c9;"></div>
<span class="t" id="t101" style="left:13.50px;top:375.22px;font-size:12.5px;color:#444;transform:translateX(-50%);transform-origin:center center;">8</span>
<div class="b" style="left:1px;top:389px;width:25px;height:1px;background:#c9c9c9;"></div>
<span class="t" id="t102" style="left:13.50px;top:395.22px;font-size:12.5px;color:#444;transform:translateX(-50%);transform-origin:center center;">9</span>
<div class="b" style="left:1px;top:409px;width:25px;height:1px;background:#c9c9c9;"></div>
<span class="t" id="t103" style="left:13.50px;top:415.22px;font-size:12.5px;color:#444;transform:translateX(-50%);transform-origin:center center;">10</span>
<div class="b" style="left:1px;top:429px;width:25px;height:1px;background:#c9c9c9;"></div>
<span class="t" id="t104" style="left:13.50px;top:435.22px;font-size:12.5px;color:#444;transform:translateX(-50%);transform-origin:center center;">11</span>
<div class="b" style="left:1px;top:449px;width:25px;height:1px;background:#c9c9c9;"></div>
<span class="t" id="t105" style="left:13.50px;top:455.22px;font-size:12.5px;color:#444;transform:translateX(-50%);transform-origin:center center;">12</span>
<div class="b" style="left:1px;top:469px;width:25px;height:1px;background:#c9c9c9;"></div>
<span class="t" id="t106" style="left:13.50px;top:475.22px;font-size:12.5px;color:#444;transform:translateX(-50%);transform-origin:center center;">13</span>
<div class="b" style="left:1px;top:489px;width:25px;height:1px;background:#c9c9c9;"></div>
<span class="t" id="t107" style="left:13.50px;top:495.22px;font-size:12.5px;color:#444;transform:translateX(-50%);transform-origin:center center;">14</span>
<div class="b" style="left:1px;top:509px;width:25px;height:1px;background:#c9c9c9;"></div>
<span class="t" id="t108" style="left:13.50px;top:515.22px;font-size:12.5px;color:#217346;transform:translateX(-50%);transform-origin:center center;">15</span>
<div class="b" style="left:1px;top:529px;width:25px;height:1px;background:#c9c9c9;"></div>
<span class="t" id="t109" style="left:13.50px;top:535.22px;font-size:12.5px;color:#444;transform:translateX(-50%);transform-origin:center center;">16</span>
<div class="b" style="left:1px;top:549px;width:25px;height:1px;background:#c9c9c9;"></div>
<span class="t" id="t110" style="left:13.50px;top:555.22px;font-size:12.5px;color:#444;transform:translateX(-50%);transform-origin:center center;">17</span>
<div class="b" style="left:1px;top:569px;width:25px;height:1px;background:#c9c9c9;"></div>
<span class="t" id="t111" style="left:13.50px;top:575.22px;font-size:12.5px;color:#444;transform:translateX(-50%);transform-origin:center center;">18</span>
<div class="b" style="left:1px;top:589px;width:25px;height:1px;background:#c9c9c9;"></div>
<span class="t" id="t112" style="left:13.50px;top:595.22px;font-size:12.5px;color:#444;transform:translateX(-50%);transform-origin:center center;">19</span>
<div class="b" style="left:1px;top:609px;width:25px;height:1px;background:#c9c9c9;"></div>
<span class="t" id="t113" style="left:13.50px;top:615.22px;font-size:12.5px;color:#444;transform:translateX(-50%);transform-origin:center center;">20</span>
<div class="b" style="left:1px;top:629px;width:25px;height:1px;background:#c9c9c9;"></div>
<span class="t" id="t114" style="left:13.50px;top:635.22px;font-size:12.5px;color:#444;transform:translateX(-50%);transform-origin:center center;">21</span>
<div class="b" style="left:1px;top:649px;width:25px;height:1px;background:#c9c9c9;"></div>
<span class="t" id="t115" style="left:13.50px;top:655.22px;font-size:12.5px;color:#444;transform:translateX(-50%);transform-origin:center center;">22</span>
<div class="b" style="left:1px;top:669px;width:25px;height:1px;background:#c9c9c9;"></div>
<span class="t" id="t116" style="left:13.50px;top:675.22px;font-size:12.5px;color:#444;transform:translateX(-50%);transform-origin:center center;">23</span>
<div class="b" style="left:1px;top:689px;width:25px;height:1px;background:#c9c9c9;"></div>
<span class="t" id="t117" style="left:13.50px;top:695.22px;font-size:12.5px;color:#444;transform:translateX(-50%);transform-origin:center center;">24</span>
<div class="b" style="left:1px;top:709px;width:25px;height:1px;background:#c9c9c9;"></div>
<span class="t" id="t118" style="left:13.50px;top:715.22px;font-size:12.5px;color:#444;transform:translateX(-50%);transform-origin:center center;">25</span>
<div class="b" style="left:1px;top:729px;width:25px;height:1px;background:#c9c9c9;"></div>
<span class="t" id="t119" style="left:13.50px;top:735.22px;font-size:12.5px;color:#444;transform:translateX(-50%);transform-origin:center center;">26</span>
<div class="b" style="left:1px;top:749px;width:25px;height:1px;background:#c9c9c9;"></div>
<span class="t" id="t120" style="left:13.50px;top:755.22px;font-size:12.5px;color:#444;transform:translateX(-50%);transform-origin:center center;">27</span>
<div class="b" style="left:1px;top:769px;width:25px;height:1px;background:#c9c9c9;"></div>
<span class="t" id="t121" style="left:13.50px;top:775.22px;font-size:12.5px;color:#444;transform:translateX(-50%);transform-origin:center center;">28</span>
<div class="b" style="left:1px;top:789px;width:25px;height:1px;background:#c9c9c9;"></div>
<span class="t" id="t122" style="left:13.50px;top:795.22px;font-size:12.5px;color:#444;transform:translateX(-50%);transform-origin:center center;">29</span>
<div class="b" style="left:1px;top:809px;width:25px;height:1px;background:#c9c9c9;"></div>
<span class="t" id="t123" style="left:13.50px;top:815.22px;font-size:12.5px;color:#444;transform:translateX(-50%);transform-origin:center center;">30</span>
<div class="b" style="left:1px;top:829px;width:25px;height:1px;background:#c9c9c9;"></div>
<div class="b" style="left:26px;top:230px;width:1px;height:603px;background:#a0a0a0;"></div>
<div class="b" style="left:25px;top:510px;width:2px;height:20px;background:#217346;"></div>
<div class="b" style="left:27px;top:230px;width:204px;height:19px;background:#d9e1f2;"></div>
<div class="b" style="left:27px;top:249px;width:204px;height:1px;background:#8ea9db;"></div>
<div class="b" style="left:27px;top:250px;width:203px;height:540px;background:#fff;"></div>
<div class="b" style="left:27px;top:269px;width:204px;height:1px;background:#8ea9db;"></div>
<div class="b" style="left:27px;top:529px;width:204px;height:1px;background:#8ea9db;"></div>
<div class="b" style="left:27px;top:769px;width:204px;height:1px;background:#8ea9db;"></div>
<div class="b" style="left:27px;top:770px;width:204px;height:20px;background:#d9e1f2;"></div>
<span class="t" id="t124" style="left:29.50px;top:233.83px;font-size:13.2px;color:#000;font-weight:700;transform:scaleX(0.9279);transform-origin:left center;">Row Labels</span>
<span class="t" id="t125" style="left:121.00px;top:233.83px;font-size:13.2px;color:#000;font-weight:700;transform:scaleX(0.9788);transform-origin:left center;">Sum of OrderQty</span>
<span class="t" id="t126" style="left:268.00px;top:233.83px;font-size:13.2px;color:#000;transform:scaleX(0.9790);transform-origin:left center;">(2013 - 2012) / 2012</span>
<div class="b" style="left:101px;top:231px;width:17px;height:17px;background:linear-gradient(#ffffff,#e4e4e4);border:1px solid #b5b5b5;"></div>
<svg class="b" style="left:104px;top:235px;" width="12" height="10" viewBox="0 0 12 10"><path d="M4 1 H11.5 L8.7 4.2 V9 L6.8 7.5 V4.2 Z" fill="#444"/><path d="M0.5 6 H4.5 L2.5 8.3 Z" fill="#444"/></svg>
<div class="b" style="left:31px;top:255px;width:9px;height:9px;background:#fff;border:1px solid #969696;"></div><div class="b" style="left:33px;top:259px;width:5px;height:1px;background:#555;"></div>
<span class="t" id="t127" style="left:41.50px;top:253.83px;font-size:13.2px;color:#000;font-weight:700;transform:scaleX(0.9883);transform-origin:left center;">2012</span>
<span class="t" id="t128" style="left:228.00px;top:253.83px;font-size:13.2px;color:#000;font-weight:700;transform:translateX(-100%) scaleX(0.9883);transform-origin:right center;">2048</span>
<span class="t" id="t129" style="left:54.50px;top:273.83px;font-size:13.2px;color:#000;transform:scaleX(0.9405);transform-origin:left center;">Jan</span>
<span class="t" id="t130" style="left:228.00px;top:273.83px;font-size:13.2px;color:#000;transform:translateX(-100%) scaleX(0.9761);transform-origin:right center;">153</span>
<span class="t" id="t131" style="left:388.40px;top:273.83px;font-size:13.2px;color:#000;transform:translateX(-100%) scaleX(0.9694);transform-origin:right center;">-18.95%</span>
<span class="t" id="t132" style="left:54.50px;top:293.83px;font-size:13.2px;color:#000;transform:scaleX(0.9897);transform-origin:left center;">Feb</span>
<span class="t" id="t133" style="left:228.00px;top:293.83px;font-size:13.2px;color:#000;transform:translateX(-100%) scaleX(0.9583);transform-origin:right center;">48</span>
<span class="t" id="t134" style="left:388.40px;top:293.83px;font-size:13.2px;color:#000;transform:translateX(-100%) scaleX(0.9709);transform-origin:right center;">204.17%</span>
<span class="t" id="t135" style="left:54.50px;top:313.83px;font-size:13.2px;color:#000;transform:scaleX(1.0344);transform-origin:left center;">Mar</span>
<span class="t" id="t136" style="left:228.00px;top:313.83px;font-size:13.2px;color:#000;transform:translateX(-100%) scaleX(0.9761);transform-origin:right center;">125</span>
<span class="t" id="t137" style="left:388.40px;top:313.83px;font-size:13.2px;color:#000;transform:translateX(-100%) scaleX(0.9639);transform-origin:right center;">95.20%</span>
<span class="t" id="t138" style="left:54.50px;top:333.83px;font-size:13.2px;color:#000;transform:scaleX(1.0472);transform-origin:left center;">Apr</span>
<span class="t" id="t139" style="left:228.00px;top:333.83px;font-size:13.2px;color:#000;transform:translateX(-100%) scaleX(1.0218);transform-origin:right center;">114</span>
<span class="t" id="t140" style="left:388.40px;top:333.83px;font-size:13.2px;color:#000;transform:translateX(-100%) scaleX(0.9639);transform-origin:right center;">59.65%</span>
<span class="t" id="t141" style="left:54.50px;top:353.83px;font-size:13.2px;color:#000;transform:scaleX(1.0232);transform-origin:left center;">May</span>
<span class="t" id="t142" style="left:228.00px;top:353.83px;font-size:13.2px;color:#000;transform:translateX(-100%) scaleX(0.9761);transform-origin:right center;">215</span>
<span class="t" id="t143" style="left:388.40px;top:353.83px;font-size:13.2px;color:#000;transform:translateX(-100%) scaleX(0.9639);transform-origin:right center;">20.47%</span>
<span class="t" id="t144" style="left:54.50px;top:373.83px;font-size:13.2px;color:#000;transform:scaleX(0.9640);transform-origin:left center;">Jun</span>
<span class="t" id="t145" style="left:228.00px;top:373.83px;font-size:13.2px;color:#000;transform:translateX(-100%) scaleX(0.9761);transform-origin:right center;">345</span>
<span class="t" id="t146" style="left:388.40px;top:373.83px;font-size:13.2px;color:#000;transform:translateX(-100%) scaleX(0.9639);transform-origin:right center;">19.71%</span>
<span class="t" id="t147" style="left:54.50px;top:393.83px;font-size:13.2px;color:#000;transform:scaleX(0.9787);transform-origin:left center;">Jul</span>
<span class="t" id="t148" style="left:228.00px;top:393.83px;font-size:13.2px;color:#000;transform:translateX(-100%) scaleX(0.9761);transform-origin:right center;">230</span>
<span class="t" id="t149" style="left:388.40px;top:393.83px;font-size:13.2px;color:#000;transform:translateX(-100%) scaleX(0.9639);transform-origin:right center;">56.96%</span>
<span class="t" id="t150" style="left:54.50px;top:413.83px;font-size:13.2px;color:#000;">Aug</span>
<span class="t" id="t151" style="left:228.00px;top:413.83px;font-size:13.2px;color:#000;transform:translateX(-100%) scaleX(0.9761);transform-origin:right center;">154</span>
<span class="t" id="t152" style="left:388.40px;top:413.83px;font-size:13.2px;color:#000;transform:translateX(-100%) scaleX(0.9639);transform-origin:right center;">25.97%</span>
<span class="t" id="t153" style="left:54.50px;top:433.83px;font-size:13.2px;color:#000;transform:scaleX(0.9374);transform-origin:left center;">Sep</span>
<span class="t" id="t154" style="left:228.00px;top:433.83px;font-size:13.2px;color:#000;transform:translateX(-100%) scaleX(0.9761);transform-origin:right center;">224</span>
<span class="t" id="t155" style="left:388.40px;top:433.83px;font-size:13.2px;color:#000;transform:translateX(-100%) scaleX(0.9639);transform-origin:right center;">29.91%</span>
<span class="t" id="t156" style="left:54.50px;top:453.83px;font-size:13.2px;color:#000;">Oct</span>
<span class="t" id="t157" style="left:228.00px;top:453.83px;font-size:13.2px;color:#000;transform:translateX(-100%) scaleX(0.9761);transform-origin:right center;">220</span>
<span class="t" id="t158" style="left:388.40px;top:453.83px;font-size:13.2px;color:#000;transform:translateX(-100%) scaleX(0.9639);transform-origin:right center;">10.45%</span>
<span class="t" id="t159" style="left:54.50px;top:473.83px;font-size:13.2px;color:#000;transform:scaleX(1.0233);transform-origin:left center;">Nov</span>
<span class="t" id="t160" style="left:228.00px;top:473.83px;font-size:13.2px;color:#000;transform:translateX(-100%) scaleX(0.9583);transform-origin:right center;">85</span>
<span class="t" id="t161" style="left:388.40px;top:473.83px;font-size:13.2px;color:#000;transform:translateX(-100%) scaleX(0.9639);transform-origin:right center;">42.35%</span>
<span class="t" id="t162" style="left:54.50px;top:493.83px;font-size:13.2px;color:#000;transform:scaleX(0.9594);transform-origin:left center;">Dec</span>
<span class="t" id="t163" style="left:228.00px;top:493.83px;font-size:13.2px;color:#000;transform:translateX(-100%) scaleX(0.9761);transform-origin:right center;">135</span>
<span class="t" id="t164" style="left:388.40px;top:493.83px;font-size:13.2px;color:#000;transform:translateX(-100%) scaleX(0.9694);transform-origin:right center;">-12.59%</span>
<div class="b" style="left:31px;top:515px;width:9px;height:9px;background:#fff;border:1px solid #969696;"></div><div class="b" style="left:33px;top:519px;width:5px;height:1px;background:#555;"></div>
<span class="t" id="t165" style="left:41.50px;top:513.83px;font-size:13.2px;color:#000;font-weight:700;transform:scaleX(0.9883);transform-origin:left center;">2013</span>
<span class="t" id="t166" style="left:228.00px;top:513.83px;font-size:13.2px;color:#000;font-weight:700;transform:translateX(-100%) scaleX(0.9883);transform-origin:right center;">2696</span>
<span class="t" id="t167" style="left:54.50px;top:533.83px;font-size:13.2px;color:#000;transform:scaleX(0.9405);transform-origin:left center;">Jan</span>
<span class="t" id="t168" style="left:228.00px;top:533.83px;font-size:13.2px;color:#000;transform:translateX(-100%) scaleX(0.9761);transform-origin:right center;">124</span>
<span class="t" id="t169" style="left:54.50px;top:553.83px;font-size:13.2px;color:#000;transform:scaleX(0.9897);transform-origin:left center;">Feb</span>
<span class="t" id="t170" style="left:228.00px;top:553.83px;font-size:13.2px;color:#000;transform:translateX(-100%) scaleX(0.9761);transform-origin:right center;">146</span>
<span class="t" id="t171" style="left:54.50px;top:573.83px;font-size:13.2px;color:#000;transform:scaleX(1.0344);transform-origin:left center;">Mar</span>
<span class="t" id="t172" style="left:228.00px;top:573.83px;font-size:13.2px;color:#000;transform:translateX(-100%) scaleX(0.9761);transform-origin:right center;">244</span>
<span class="t" id="t173" style="left:54.50px;top:593.83px;font-size:13.2px;color:#000;transform:scaleX(1.0472);transform-origin:left center;">Apr</span>
<span class="t" id="t174" style="left:228.00px;top:593.83px;font-size:13.2px;color:#000;transform:translateX(-100%) scaleX(0.9761);transform-origin:right center;">182</span>
<span class="t" id="t175" style="left:54.50px;top:613.83px;font-size:13.2px;color:#000;transform:scaleX(1.0232);transform-origin:left center;">May</span>
<span class="t" id="t176" style="left:228.00px;top:613.83px;font-size:13.2px;color:#000;transform:translateX(-100%) scaleX(0.9761);transform-origin:right center;">259</span>
<span class="t" id="t177" style="left:54.50px;top:633.83px;font-size:13.2px;color:#000;transform:scaleX(0.9640);transform-origin:left center;">Jun</span>
<span class="t" id="t178" style="left:228.00px;top:633.83px;font-size:13.2px;color:#000;transform:translateX(-100%) scaleX(0.9761);transform-origin:right center;">413</span>
<span class="t" id="t179" style="left:54.50px;top:653.83px;font-size:13.2px;color:#000;transform:scaleX(0.9787);transform-origin:left center;">Jul</span>
<span class="t" id="t180" style="left:228.00px;top:653.83px;font-size:13.2px;color:#000;transform:translateX(-100%) scaleX(0.9761);transform-origin:right center;">361</span>
<span class="t" id="t181" style="left:54.50px;top:673.83px;font-size:13.2px;color:#000;">Aug</span>
<span class="t" id="t182" style="left:228.00px;top:673.83px;font-size:13.2px;color:#000;transform:translateX(-100%) scaleX(0.9761);transform-origin:right center;">194</span>
<span class="t" id="t183" style="left:54.50px;top:693.83px;font-size:13.2px;color:#000;transform:scaleX(0.9374);transform-origin:left center;">Sep</span>
<span class="t" id="t184" style="left:228.00px;top:693.83px;font-size:13.2px;color:#000;transform:translateX(-100%) scaleX(0.9761);transform-origin:right center;">291</span>
<span class="t" id="t185" style="left:54.50px;top:713.83px;font-size:13.2px;color:#000;">Oct</span>
<span class="t" id="t186" style="left:228.00px;top:713.83px;font-size:13.2px;color:#000;transform:translateX(-100%) scaleX(0.9761);transform-origin:right center;">243</span>
<span class="t" id="t187" style="left:54.50px;top:733.83px;font-size:13.2px;color:#000;transform:scaleX(1.0233);transform-origin:left center;">Nov</span>
<span class="t" id="t188" style="left:228.00px;top:733.83px;font-size:13.2px;color:#000;transform:translateX(-100%) scaleX(0.9761);transform-origin:right center;">121</span>
<span class="t" id="t189" style="left:54.50px;top:753.83px;font-size:13.2px;color:#000;transform:scaleX(0.9594);transform-origin:left center;">Dec</span>
<span class="t" id="t190" style="left:228.00px;top:753.83px;font-size:13.2px;color:#000;transform:translateX(-100%) scaleX(1.0218);transform-origin:right center;">118</span>
<span class="t" id="t191" style="left:29.20px;top:773.83px;font-size:13.2px;color:#000;font-weight:700;transform:scaleX(0.9722);transform-origin:left center;">Grand Total</span>
<span class="t" id="t192" style="left:228.00px;top:773.83px;font-size:13.2px;color:#000;font-weight:700;transform:translateX(-100%) scaleX(0.9883);transform-origin:right center;">4744</span>
<div class="b" style="left:264px;top:508px;width:129px;height:23px;border:2px solid #217346;"></div>
<div class="b" style="left:388px;top:526px;width:7px;height:7px;background:#fff;"></div>
<div class="b" style="left:389px;top:527px;width:5px;height:5px;background:#217346;"></div>
<div class="b" style="left:1531px;top:212px;width:15px;height:15px;background:#fff;border:1px solid #ababab;"></div>
<svg class="b" style="left:1535px;top:217px;" width="8" height="5" viewBox="0 0 8 5"><path d="M0.5 4.5 L4 0.5 L7.5 4.5 Z" fill="#777"/></svg>
<div class="b" style="left:1531px;top:227px;width:15px;height:592px;background:#dcdadc;"></div>
<div class="b" style="left:1531px;top:227px;width:15px;height:273px;background:#fff;border:1px solid #ababab;"></div>
<div class="b" style="left:1531px;top:819px;width:15px;height:15px;background:#fff;border:1px solid #ababab;"></div>
<svg class="b" style="left:1535px;top:824px;" width="8" height="5" viewBox="0 0 8 5"><path d="M0.5 0.5 L4 4.5 L7.5 0.5 Z" fill="#777"/></svg>
<div class="b" style="left:547px;top:386px;width:481px;height:289px;background:#fff;border:1px solid #d6d4d8;"></div>
<div class="b" style="left:558px;top:394px;width:87px;height:17px;background:linear-gradient(#dcdcdc,#c8c8c8);border:1px solid #d0d0d0;"></div>
<span class="t" id="t193" style="left:561.50px;top:397.87px;font-size:11.5px;color:#000;transform:scaleX(0.9434);transform-origin:left center;">Sum of OrderQty</span>
<span class="t" id="t194" style="left:787.00px;top:425.76px;font-size:18px;color:#595959;transform:translateX(-50%) scaleX(0.9466);transform-origin:center center;">Total</span>
<span class="t" id="t195" style="left:573.50px;top:582.27px;font-size:11.5px;color:#595959;transform:translateX(-100%) scaleX(0.9834);transform-origin:right center;">0</span>
<span class="t" id="t196" style="left:573.50px;top:568.27px;font-size:11.5px;color:#595959;transform:translateX(-100%) scaleX(0.9612);transform-origin:right center;">50</span>
<span class="t" id="t197" style="left:573.50px;top:554.27px;font-size:11.5px;color:#595959;transform:translateX(-100%) scaleX(0.9537);transform-origin:right center;">100</span>
<span class="t" id="t198" style="left:573.50px;top:540.27px;font-size:11.5px;color:#595959;transform:translateX(-100%) scaleX(0.9537);transform-origin:right center;">150</span>
<span class="t" id="t199" style="left:573.50px;top:526.27px;font-size:11.5px;color:#595959;transform:translateX(-100%) scaleX(0.9537);transform-origin:right center;">200</span>
<span class="t" id="t200" style="left:573.50px;top:512.27px;font-size:11.5px;color:#595959;transform:translateX(-100%) scaleX(0.9537);transform-origin:right center;">250</span>
<span class="t" id="t201" style="left:573.50px;top:498.27px;font-size:11.5px;color:#595959;transform:translateX(-100%) scaleX(0.9537);transform-origin:right center;">300</span>
<span class="t" id="t202" style="left:573.50px;top:484.27px;font-size:11.5px;color:#595959;transform:translateX(-100%) scaleX(0.9537);transform-origin:right center;">350</span>
<span class="t" id="t203" style="left:573.50px;top:470.27px;font-size:11.5px;color:#595959;transform:translateX(-100%) scaleX(0.9537);transform-origin:right center;">400</span>
<span class="t" id="t204" style="left:573.50px;top:456.27px;font-size:11.5px;color:#595959;transform:translateX(-100%) scaleX(0.9537);transform-origin:right center;">450</span>
<div class="b" style="left:585px;top:588px;width:373px;height:1px;background:#d9d9d9;"></div><div class="b" style="left:585px;top:574px;width:373px;height:1px;background:#d9d9d9;"></div><div class="b" style="left:585px;top:560px;width:373px;height:1px;background:#d9d9d9;"></div><div class="b" style="left:585px;top:546px;width:373px;height:1px;background:#d9d9d9;"></div><div class="b" style="left:585px;top:532px;width:373px;height:1px;background:#d9d9d9;"></div><div class="b" style="left:585px;top:518px;width:373px;height:1px;background:#d9d9d9;"></div><div class="b" style="left:585px;top:504px;width:373px;height:1px;background:#d9d9d9;"></div><div class="b" style="left:585px;top:490px;width:373px;height:1px;background:#d9d9d9;"></div><div class="b" style="left:585px;top:476px;width:373px;height:1px;background:#d9d9d9;"></div><div class="b" style="left:585px;top:462px;width:373px;height:1px;background:#d9d9d9;"></div>
<svg class="b" style="left:585px;top:440px;" width="373" height="148" viewBox="0 0 373 148"><g fill="#4472c4"><rect x="5" y="105.16" width="5" height="42.84"/><rect x="21" y="134.56" width="5" height="13.44"/><rect x="36" y="113.00" width="5" height="35.00"/><rect x="52" y="116.08" width="5" height="31.92"/><rect x="67" y="87.80" width="5" height="60.20"/><rect x="83" y="51.40" width="5" height="96.60"/><rect x="98" y="83.60" width="5" height="64.40"/><rect x="114" y="104.88" width="5" height="43.12"/><rect x="129" y="85.28" width="5" height="62.72"/><rect x="145" y="86.40" width="5" height="61.60"/><rect x="160" y="124.20" width="5" height="23.80"/><rect x="176" y="110.20" width="5" height="37.80"/><rect x="191" y="113.28" width="5" height="34.72"/><rect x="207" y="107.12" width="5" height="40.88"/><rect x="222" y="79.68" width="5" height="68.32"/><rect x="238" y="97.04" width="5" height="50.96"/><rect x="253" y="75.48" width="5" height="72.52"/><rect x="269" y="32.36" width="5" height="115.64"/><rect x="284" y="46.92" width="5" height="101.08"/><rect x="300" y="93.68" width="5" height="54.32"/><rect x="315" y="66.52" width="5" height="81.48"/><rect x="331" y="79.96" width="5" height="68.04"/><rect x="346" y="114.12" width="5" height="33.88"/><rect x="362" y="114.96" width="5" height="33.04"/></g></svg>
<span class="t" style="left:593px;top:595.4px;font-size:10.9px;color:#595959;transform-origin:0 0;transform:rotate(-90deg) translate(-100%,-50%);">Jan</span>
<span class="t" style="left:609px;top:595.4px;font-size:10.9px;color:#595959;transform-origin:0 0;transform:rotate(-90deg) translate(-100%,-50%);">Feb</span>
<span class="t" style="left:624px;top:595.4px;font-size:10.9px;color:#595959;transform-origin:0 0;transform:rotate(-90deg) translate(-100%,-50%);">Mar</span>
<span class="t" style="left:640px;top:595.4px;font-size:10.9px;color:#595959;transform-origin:0 0;transform:rotate(-90deg) translate(-100%,-50%);">Apr</span>
<span class="t" style="left:655px;top:595.4px;font-size:10.9px;color:#595959;transform-origin:0 0;transform:rotate(-90deg) translate(-100%,-50%);">May</span>
<span class="t" style="left:671px;top:595.4px;font-size:10.9px;color:#595959;transform-origin:0 0;transform:rotate(-90deg) translate(-100%,-50%);">Jun</span>
<span class="t" style="left:686px;top:595.4px;font-size:10.9px;color:#595959;transform-origin:0 0;transform:rotate(-90deg) translate(-100%,-50%);">Jul</span>
<span class="t" style="left:702px;top:595.4px;font-size:10.9px;color:#595959;transform-origin:0 0;transform:rotate(-90deg) translate(-100%,-50%);">Aug</span>
<span class="t" style="left:717px;top:595.4px;font-size:10.9px;color:#595959;transform-origin:0 0;transform:rotate(-90deg) translate(-100%,-50%);">Sep</span>
<span class="t" style="left:733px;top:595.4px;font-size:10.9px;color:#595959;transform-origin:0 0;transform:rotate(-90deg) translate(-100%,-50%);">Oct</span>
<span class="t" style="left:748px;top:595.4px;font-size:10.9px;color:#595959;transform-origin:0 0;transform:rotate(-90deg) translate(-100%,-50%);">Nov</span>
<span class="t" style="left:764px;top:595.4px;font-size:10.9px;color:#595959;transform-origin:0 0;transform:rotate(-90deg) translate(-100%,-50%);">Dec</span>
<span class="t" style="left:779px;top:595.4px;font-size:10.9px;color:#595959;transform-origin:0 0;transform:rotate(-90deg) translate(-100%,-50%);">Jan</span>
<span class="t" style="left:795px;top:595.4px;font-size:10.9px;color:#595959;transform-origin:0 0;transform:rotate(-90deg) translate(-100%,-50%);">Feb</span>
<span class="t" style="left:810px;top:595.4px;font-size:10.9px;color:#595959;transform-origin:0 0;transform:rotate(-90deg) translate(-100%,-50%);">Mar</span>
<span class="t" style="left:826px;top:595.4px;font-size:10.9px;color:#595959;transform-origin:0 0;transform:rotate(-90deg) translate(-100%,-50%);">Apr</span>
<span class="t" style="left:841px;top:595.4px;font-size:10.9px;color:#595959;transform-origin:0 0;transform:rotate(-90deg) translate(-100%,-50%);">May</span>
<span class="t" style="left:857px;top:595.4px;font-size:10.9px;color:#595959;transform-origin:0 0;transform:rotate(-90deg) translate(-100%,-50%);">Jun</span>
<span class="t" style="left:872px;top:595.4px;font-size:10.9px;color:#595959;transform-origin:0 0;transform:rotate(-90deg) translate(-100%,-50%);">Jul</span>
<span class="t" style="left:888px;top:595.4px;font-size:10.9px;color:#595959;transform-origin:0 0;transform:rotate(-90deg) translate(-100%,-50%);">Aug</span>
<span class="t" style="left:903px;top:595.4px;font-size:10.9px;color:#595959;transform-origin:0 0;transform:rotate(-90deg) translate(-100%,-50%);">Sep</span>
<span class="t" style="left:919px;top:595.4px;font-size:10.9px;color:#595959;transform-origin:0 0;transform:rotate(-90deg) translate(-100%,-50%);">Oct</span>
<span class="t" style="left:934px;top:595.4px;font-size:10.9px;color:#595959;transform-origin:0 0;transform:rotate(-90deg) translate(-100%,-50%);">Nov</span>
<span class="t" style="left:950px;top:595.4px;font-size:10.9px;color:#595959;transform-origin:0 0;transform:rotate(-90deg) translate(-100%,-50%);">Dec</span>
<span class="t" id="t205" style="left:678.00px;top:627.77px;font-size:11.5px;color:#595959;transform:translateX(-50%) scaleX(0.9377);transform-origin:center center;">2012</span>
<span class="t" id="t206" style="left:864.00px;top:627.77px;font-size:11.5px;color:#595959;transform:translateX(-50%) scaleX(0.9377);transform-origin:center center;">2013</span>
<div class="b" style="left:585px;top:588px;width:1px;height:53px;background:#d9d9d9;"></div>
<div class="b" style="left:771px;top:588px;width:1px;height:53px;background:#d9d9d9;"></div>
<div class="b" style="left:957px;top:588px;width:1px;height:53px;background:#d9d9d9;"></div>
<div class="b" style="left:977px;top:545px;width:7px;height:7px;background:#4472c4;"></div>
<span class="t" id="t207" style="left:987.50px;top:542.07px;font-size:11.5px;color:#595959;transform:scaleX(0.9672);transform-origin:left center;">Total</span>
<div class="b" style="left:558px;top:648px;width:56px;height:17px;background:linear-gradient(#dcdcdc,#c8c8c8);border:1px solid #d0d0d0;"></div>
<span class="t" id="t208" style="left:561.50px;top:651.87px;font-size:11.5px;color:#000;transform:scaleX(0.9310);transform-origin:left center;">Years</span>
<svg class="b" style="left:593px;top:652px;" width="19" height="11" viewBox="0 0 19 11"><path d="M0.5 5.5 H6.5 L3.5 9 Z" fill="#333"/><path d="M7 0.5 H18 L14 5 V10.5 L11 8.5 V5 Z" fill="#555"/></svg>
<div class="b" style="left:616px;top:648px;width:70px;height:17px;background:linear-gradient(#dcdcdc,#c8c8c8);border:1px solid #d0d0d0;"></div>
<span class="t" id="t209" style="left:619.50px;top:651.87px;font-size:11.5px;color:#000;transform:scaleX(0.9220);transform-origin:left center;">OrderDate</span>
<svg class="b" style="left:673px;top:654px;" width="9" height="6" viewBox="0 0 9 6"><path d="M0.5 0.5 H8.5 L4.5 5 Z" fill="#333"/></svg>
<div class="b" style="left:984px;top:648px;width:15px;height:17px;background:linear-gradient(#dcdcdc,#c8c8c8);border:1px solid #d0d0d0;"></div>
<div class="b" style="left:1000px;top:648px;width:15px;height:17px;background:linear-gradient(#dcdcdc,#c8c8c8);border:1px solid #d0d0d0;"></div>
<svg class="b" style="left:987px;top:652px;" width="9" height="9" viewBox="0 0 9 9"><path d="M4.5 1 V8 M1 4.5 H8" stroke="#8a8a8a" stroke-width="1.3"/></svg>
<svg class="b" style="left:1003px;top:652px;" width="9" height="9" viewBox="0 0 9 9"><path d="M1.5 4.5 H7.5" stroke="#8a8a8a" stroke-width="1.3"/></svg>
<div class="b" style="left:1px;top:834px;width:1548px;height:27px;background:#e6e6e6;"></div>
<svg class="b" style="left:27px;top:842px;" width="6" height="10" viewBox="0 0 6 10"><path d="M5 1 L1 5 L5 9 Z" fill="#c8c8c8"/></svg>
<svg class="b" style="left:56px;top:842px;" width="6" height="10" viewBox="0 0 6 10"><path d="M1 1 L5 5 L1 9 Z" fill="#c8c8c8"/></svg>
<div class="b" style="left:101px;top:838px;width:1px;height:19px;background:#9a9a9a;"></div>
<span class="t" id="t210" style="left:114.00px;top:841.42px;font-size:12.5px;color:#444;transform:scaleX(1.0308);transform-origin:left center;">Product 712</span>
<div class="b" style="left:198px;top:833px;width:121px;height:25px;background:#fff;border-left:1px solid #bdbdbd;border-right:1px solid #bdbdbd;"></div>
<div class="b" style="left:198px;top:856px;width:121px;height:2px;background:#217346;"></div>
<span class="t" id="t211" style="left:210.50px;top:841.42px;font-size:12.5px;color:#217346;font-weight:700;transform:scaleX(1.0233);transform-origin:left center;">2012-2013 Pivot</span>
<svg class="b" style="left:351.7px;top:838.4px;" width="17" height="17" viewBox="0 0 17 17"><circle cx="8.5" cy="8.5" r="7.3" fill="none" stroke="#6a6a6a" stroke-width="1.1"/><path d="M8.5 4.8 V12.2 M4.8 8.5 H12.2" stroke="#6a6a6a" stroke-width="1.4"/></svg>
<div class="b" style="left:930px;top:841px;width:2px;height:2px;background:#a0a0a0;border-radius:1px;"></div>
<div class="b" style="left:930px;top:845px;width:2px;height:2px;background:#a0a0a0;border-radius:1px;"></div>
<div class="b" style="left:930px;top:849px;width:2px;height:2px;background:#a0a0a0;border-radius:1px;"></div>
<div class="b" style="left:947px;top:840px;width:16px;height:15px;background:#fff;border:1px solid #ababab;"></div>
<svg class="b" style="left:951px;top:843px;" width="6" height="9" viewBox="0 0 6 9"><path d="M5 0.8 L1 4.5 L5 8.2 Z" fill="#555"/></svg>
<div class="b" style="left:963px;top:840px;width:550px;height:15px;background:#dcdadc;"></div>
<div class="b" style="left:963px;top:840px;width:534px;height:15px;background:#fff;border:1px solid #ababab;"></div>
<div class="b" style="left:1513px;top:840px;width:15px;height:15px;background:#fff;border:1px solid #ababab;"></div>
<svg class="b" style="left:1518px;top:843px;" width="6" height="9" viewBox="0 0 6 9"><path d="M1 0.8 L5 4.5 L1 8.2 Z" fill="#555"/></svg>
<div class="b" style="left:1px;top:861px;width:1548px;height:1px;background:#d0d0d0;"></div>
<div class="b" style="left:1px;top:862px;width:1548px;height:21px;background:#f5f2f5;"></div>
<span class="t" id="t212" style="left:9.50px;top:866.97px;font-size:11.5px;color:#444;transform:scaleX(0.9023);transform-origin:left center;">Ready</span>
<div class="b" style="left:1249px;top:862px;width:40px;height:21px;background:#d6d3d3;"></div>
<svg class="b" style="left:1262px;top:865px;" width="14" height="14" viewBox="0 0 14 14"><path d="M0.5 0.5 H13.5 V13.5 H0.5 Z M0.5 4.8 H13.5 M0.5 9.2 H13.5 M4.8 0.5 V13.5 M9.2 0.5 V13.5" fill="none" stroke="#444" stroke-width="1"/></svg>
<svg class="b" style="left:1301px;top:865px;" width="15" height="14" viewBox="0 0 15 14"><rect x="0.5" y="0.5" width="14" height="13" rx="1" fill="none" stroke="#444"/><rect x="3.5" y="3.5" width="8" height="7" fill="none" stroke="#444"/><path d="M5 6 H10 M5 8 H10" stroke="#444" stroke-width="0.8"/></svg>
<svg class="b" style="left:1342px;top:865px;" width="15" height="14" viewBox="0 0 15 14"><path d="M0.5 0.5 H13.5 V12.5 H0.5 Z" fill="none" stroke="#444"/><path d="M4.5 0.5 V7.5 H9.5 V0.5 M0.5 7.5 H9.5" fill="none" stroke="#444"/></svg>
<div class="b" style="left:1375px;top:871px;width:8px;height:1px;background:#444;"></div>
<div class="b" style="left:1388px;top:871.5px;width:100px;height:1px;background:#a6a6a6;"></div>
<div class="b" style="left:1436px;top:867px;width:5px;height:11px;background:#7a7a7a;"></div>
<div class="b" style="left:1493px;top:871px;width:8px;height:1px;background:#444;"></div>
<div class="b" style="left:1496.5px;top:867.5px;width:1px;height:8px;background:#444;"></div>
<span class="t" id="t213" style="left:1515.00px;top:866.47px;font-size:11.5px;color:#444;transform:scaleX(0.8837);transform-origin:left center;">100%</span>
<div class="b" style="left:0px;top:883px;width:1549px;height:39px;background:#060e1f;"></div>
<div class="b" style="left:0px;top:883px;width:49px;height:39px;background:#04192a;"></div>
<svg class="b" style="left:17px;top:895px;" width="16" height="16" viewBox="0 0 16 16"><path d="M0 2.3 L6.9 1.35 V7.75 H0 Z M7.55 1.25 L16 0 V7.75 H7.55 Z M0 8.4 H6.9 V14.75 L0 13.8 Z M7.55 8.4 H16 V16 L7.55 14.85 Z" fill="#fff"/></svg>
<div class="b" style="left:49px;top:883px;width:344px;height:39px;background:#f5f2f5;"></div>
<div class="b" style="left:49px;top:883px;width:344px;height:1px;background:#a9a7a9;"></div>
<svg class="b" style="left:60px;top:894px;" width="18" height="18" viewBox="0 0 18 18"><circle cx="11" cy="6.8" r="5.3" fill="none" stroke="#222" stroke-width="1.3"/><path d="M7.2 10.6 L1 17" stroke="#222" stroke-width="1.5"/></svg>
<span class="t" id="t214" style="left:89.50px;top:896.30px;font-size:15px;color:#2b2b2b;transform:scaleX(0.9579);transform-origin:left center;">Type here to search</span>
<svg class="b" style="left:407px;top:894px;" width="19" height="17" viewBox="0 0 19 17"><path d="M2.5 3 V1.5 H13.5 V3 M2.5 14 V15.5 H13.5 V14" fill="none" stroke="#fff" stroke-width="1"/><rect x="2.5" y="5.5" width="11" height="7" fill="none" stroke="#fff" stroke-width="1.1"/><path d="M16.5 1 V16" stroke="#fff" stroke-width="1"/><rect x="15" y="5" width="3" height="3" fill="#fff"/></svg>
<svg class="b" style="left:456px;top:890px;" width="25" height="25" viewBox="0 0 25 25"><defs><linearGradient id="eg1" x1="0" y1="0" x2="1" y2="1"><stop offset="0" stop-color="#35c1f1"/><stop offset="1" stop-color="#0c59a4"/></linearGradient><linearGradient id="eg2" x1="0" y1="0" x2="1" y2="0"><stop offset="0" stop-color="#2fb9e8"/><stop offset="1" stop-color="#7ddb4e"/></linearGradient></defs><circle cx="12.5" cy="12.5" r="12" fill="url(#eg1)"/><path d="M1 10 C3 2 11 -1 17.5 1.5 C23 4 25.5 9 24 13.5 C22.5 17 17 17.5 15.5 15 C17 13 16.5 9.5 12.5 8.5 C7 7.5 2 10.5 1 14 Z" fill="url(#eg2)"/><path d="M6.5 14 C6.5 10.5 9.5 8.6 12.5 8.6 C16.5 9.3 17 13 15.5 15 C15 17.5 18 19.5 22 17.8 C19.5 23.5 12 25.5 8.5 21 C6.8 18.5 6.5 16 6.5 14 Z" fill="#0d4f96"/></svg>
<svg class="b" style="left:506px;top:893px;" width="22" height="19" viewBox="0 0 22 19"><path d="M0.5 1 H8.5 L10.5 3 H21 V18 H0.5 Z" fill="#e9a81c"/><rect x="0.5" y="4" width="21" height="14.5" fill="#fbd667"/><path d="M5 18.5 V11.5 Q5 10.5 6 10.5 H16 Q17 10.5 17 11.5 V18.5 H14 V14 H8 V18.5 Z" fill="#3c8fe0"/></svg>
<div class="b" style="left:497px;top:920px;width:40px;height:2px;background:#8fcbf5;"></div>
<svg class="b" style="left:553px;top:890px;" width="26" height="25" viewBox="0 0 26 25"><path d="M18.5 0.5 L25.5 3.5 V21.5 L18.5 24.5 Z" fill="#2d9fea"/><path d="M18.5 0.5 L5 13.5 L2 11 L0.5 12 L18.5 24.5 V18 L9.5 12.5 L18.5 7 Z" fill="#1b80d0"/><path d="M0.5 8 L2.2 6.3 L18.5 18.5 V24.5 Z M0.5 17 L2.2 18.7 L8 13.8 L5 11.5 Z" fill="#1b80d0"/><path d="M0.5 8 L2.2 6.3 L18.5 18 V24.5 Z" fill="#1277c4"/></svg>
<div class="b" style="left:591px;top:883px;width:48px;height:39px;background:#2f424e;"></div>
<div class="b" style="left:591px;top:920px;width:48px;height:2px;background:#8fcbf5;"></div>
<svg class="b" style="left:603px;top:891px;" width="25" height="23" viewBox="0 0 25 23"><rect x="7" y="0" width="18" height="23" rx="1.5" fill="#1d8f58"/><rect x="16" y="0" width="9" height="6" fill="#33c481"/><rect x="16" y="6" width="9" height="6" fill="#21a366"/><rect x="16" y="12" width="9" height="6" fill="#107c41"/><rect x="7" y="0" width="9" height="6" fill="#21a366"/><rect x="7" y="6" width="9" height="6" fill="#107c41"/><rect x="7" y="12" width="18" height="11" fill="#185c37"/><rect x="0" y="5" width="13" height="13" rx="1" fill="#107c41"/><text x="6.5" y="15.5" font-size="10.5" font-weight="700" fill="#fff" text-anchor="middle">X</text></svg>
<svg class="b" style="left:652px;top:891px;" width="24" height="24" viewBox="0 0 24 24"><path d="M17 1 H23 V6 M1 16 V21.5 H6.5" fill="none" stroke="#5db13d" stroke-width="1.5"/><path d="M3.5 3 V14.5 Q9 18 14.5 14.5 V3 Z" fill="#f5c33b"/><ellipse cx="9" cy="3" rx="5.5" ry="2.3" fill="#fbe9a5"/><path d="M9 21.5 L19.5 10.5 M19 21.5 L10.5 12.5" stroke="#a45cc7" stroke-width="1.8" fill="none"/><path d="M17.5 9.5 Q21 8 22 11.5" fill="none" stroke="#a45cc7" stroke-width="1.6"/></svg>
<svg class="b" style="left:1365px;top:899px;" width="14" height="8" viewBox="0 0 14 8"><path d="M1 7 L7 1 L13 7" fill="none" stroke="#fff" stroke-width="1.2"/></svg>
<svg class="b" style="left:1388px;top:896px;" width="18" height="16" viewBox="0 0 18 16"><path d="M0.8 4.5 H3 L6.2 1 V13 L3 9.5 H0.8 Z" fill="none" stroke="#fff" stroke-width="1"/><circle cx="11.7" cy="10.5" r="4.5" fill="#e81123"/><path d="M9.7 8.5 L13.7 12.5 M13.7 8.5 L9.7 12.5" stroke="#fff" stroke-width="1.2"/></svg>
<svg class="b" style="left:1411px;top:896px;" width="18" height="15" viewBox="0 0 18 15"><rect x="4.5" y="1.5" width="12" height="9" fill="none" stroke="#fff" stroke-width="1"/><path d="M7 13.5 H14 M10.5 10.5 V13.5" stroke="#fff" stroke-width="1"/><rect x="1.5" y="1.5" width="3.5" height="3" fill="#060e1f" stroke="#fff" stroke-width="0.9"/><path d="M3.2 4.5 V13.5 H5.5" fill="none" stroke="#fff" stroke-width="0.9"/></svg>
<span class="t" id="t215" style="left:1463.50px;top:887.84px;font-size:12px;color:#fff;transform:translateX(-50%) scaleX(0.9652);transform-origin:center center;">3:26 AM</span>
<span class="t" id="t216" style="left:1464.00px;top:906.14px;font-size:12px;color:#fff;transform:translateX(-50%) scaleX(0.9740);transform-origin:center center;">4/21/2026</span>
<svg class="b" style="left:1508px;top:895px;" width="17" height="16" viewBox="0 0 17 16"><path d="M0.5 0.5 H15.5 V11.5 H10.5 L8 14.5 L5.5 11.5 H0.5 Z" fill="none" stroke="#fff" stroke-width="1"/></svg>
<div class="b" style="left:1545px;top:883px;width:1px;height:39px;background:#4a5160;"></div>
<div class="b" style="left:1549px;top:0px;width:4px;height:922px;background:#222;"></div>
<div class="b" style="left:1546px;top:441.5px;width:11px;height:18.5px;background:#222;border-radius:3px;"></div>
<div class="b" style="left:1549px;top:444px;width:2px;height:14px;background:#8a8a8a;"></div>
<div class="b" style="left:1552.6px;top:444px;width:2.2px;height:14px;background:#8a8a8a;"></div>
<div class="b" style="left:1553px;top:0px;width:366px;height:922px;background:#fff;"></div>
<div class="b" style="left:1553px;top:0px;width:366px;height:42px;background:#3d4045;"></div>
<span class="t" id="t217" style="left:1567.50px;top:-2.32px;font-size:22px;color:#fff;transform:scaleX(1.0493);transform-origin:left center;">CompTIA</span>
<span class="t" id="t218" style="left:1665.50px;top:8.68px;font-size:9px;color:#fff;">.</span>
<svg class="b" style="left:1840px;top:4px;" width="12" height="11" viewBox="0 0 12 11"><path d="M0.8 0.8 L11.2 10.2 M11.2 0.8 L0.8 10.2" stroke="#fff" stroke-width="1.5"/></svg>
<span class="t" id="t219" style="left:1856.00px;top:3.53px;font-size:14.5px;color:#fff;transform:scaleX(0.9159);transform-origin:left center;">Exit Lab</span>
<span class="t" id="t220" style="left:1568.00px;top:53.13px;font-size:14.5px;color:#212529;transform:scaleX(0.9777);transform-origin:left center;">Instructions</span>
<div class="b" style="left:1568px;top:76px;width:73px;height:2px;background:#2b2e33;"></div>
<span class="t" id="t221" style="left:1657.00px;top:53.13px;font-size:14.5px;color:#212529;transform:scaleX(0.8945);transform-origin:left center;">Resources</span>
<div class="b" style="left:1553px;top:78px;width:366px;height:1px;background:#d5d7da;"></div>
<svg class="b" style="left:1853.5px;top:51.7px;" width="16" height="16" viewBox="0 0 16 16"><circle cx="8" cy="8" r="7.4" fill="#2b2e33"/><text x="8" y="12.2" font-size="11.5" font-weight="700" fill="#fff" text-anchor="middle">?</text></svg>
<svg class="b" style="left:1884.6px;top:51.7px;" width="16" height="16" viewBox="0 0 16 16"><g transform="translate(8 8)" fill="#2b2e33"><rect x="-2.3" y="-7.6" width="4.6" height="5" rx="0.8" transform="rotate(0)"/><rect x="-2.3" y="-7.6" width="4.6" height="5" rx="0.8" transform="rotate(60)"/><rect x="-2.3" y="-7.6" width="4.6" height="5" rx="0.8" transform="rotate(120)"/><rect x="-2.3" y="-7.6" width="4.6" height="5" rx="0.8" transform="rotate(180)"/><rect x="-2.3" y="-7.6" width="4.6" height="5" rx="0.8" transform="rotate(240)"/><rect x="-2.3" y="-7.6" width="4.6" height="5" rx="0.8" transform="rotate(300)"/><circle r="5.7"/><circle r="2.5" fill="#fff"/></g></svg>
<div class="b" style="left:1908px;top:79px;width:11px;height:744px;background:#f3f3f3;border-radius:0 0 5px 5px;"></div>
<div class="b" style="left:1908px;top:574px;width:11px;height:219px;background:#696c70;border-radius:5px;"></div>
<div class="b" style="left:1566px;top:72px;width:326px;height:78px;background:#fff;border:1px solid #ffe08a;border-left:8px solid #ffe08a;border-radius:4px;"></div>
<div class="b" style="left:1553px;top:42px;width:366px;height:37px;background:#fff;"></div>
<span class="t" id="t222" style="left:1568.00px;top:53.13px;font-size:14.5px;color:#212529;transform:scaleX(0.9777);transform-origin:left center;">Instructions</span>
<div class="b" style="left:1568px;top:76px;width:73px;height:2px;background:#2b2e33;"></div>
<span class="t" id="t223" style="left:1657.00px;top:53.13px;font-size:14.5px;color:#212529;transform:scaleX(0.8945);transform-origin:left center;">Resources</span>
<div class="b" style="left:1553px;top:78px;width:366px;height:1px;background:#d5d7da;"></div>
<svg class="b" style="left:1853.5px;top:51.7px;" width="16" height="16" viewBox="0 0 16 16"><circle cx="8" cy="8" r="7.4" fill="#2b2e33"/><text x="8" y="12.2" font-size="11.5" font-weight="700" fill="#fff" text-anchor="middle">?</text></svg>
<svg class="b" style="left:1884.6px;top:51.7px;" width="16" height="16" viewBox="0 0 16 16"><g transform="translate(8 8)" fill="#2b2e33"><rect x="-2.3" y="-7.6" width="4.6" height="5" rx="0.8" transform="rotate(0)"/><rect x="-2.3" y="-7.6" width="4.6" height="5" rx="0.8" transform="rotate(60)"/><rect x="-2.3" y="-7.6" width="4.6" height="5" rx="0.8" transform="rotate(120)"/><rect x="-2.3" y="-7.6" width="4.6" height="5" rx="0.8" transform="rotate(180)"/><rect x="-2.3" y="-7.6" width="4.6" height="5" rx="0.8" transform="rotate(240)"/><rect x="-2.3" y="-7.6" width="4.6" height="5" rx="0.8" transform="rotate(300)"/><circle r="5.7"/><circle r="2.5" fill="#fff"/></g></svg>
<span class="t" id="t224" style="left:1606.00px;top:76.30px;font-size:14.3px;color:#212529;transform:scaleX(0.9660);transform-origin:left center;">each of months, then look at this change</span>
<span class="t" id="t225" style="left:1606.00px;top:96.30px;font-size:14.3px;color:#212529;transform:scaleX(0.9621);transform-origin:left center;">as a percentage. This information does not</span>
<span class="t" id="t226" style="left:1606.00px;top:116.40px;font-size:14.3px;color:#212529;transform:scaleX(0.9570);transform-origin:left center;">need to be graphed.</span>
<div class="b" style="left:1566px;top:176px;width:17px;height:17px;background:#1f6b96;border-radius:1px;"></div><svg class="b" style="left:1566px;top:176px;" width="17" height="17" viewBox="0 0 17 17"><path d="M3.5 8.5 L7 12 L13.5 4.5" fill="none" stroke="#fff" stroke-width="1.8"/></svg>
<span class="t" id="t227" style="left:1605.00px;top:177.50px;font-size:14.3px;color:#212529;transform:scaleX(0.9679);transform-origin:left center;">7. Which month had the greatest percent</span>
<span class="t" id="t228" style="left:1619.00px;top:197.50px;font-size:14.3px;color:#212529;transform:scaleX(0.9479);transform-origin:left center;">change?</span>
<div class="b" style="left:1618.5px;top:227.5px;width:20px;height:20px;background:#fff;border:2px solid #33373b;border-radius:50%;"></div>
<span class="t" id="t229" style="left:1649.00px;top:231.60px;font-size:14.3px;color:#212529;transform:scaleX(0.9322);transform-origin:left center;">Jun</span>
<div class="b" style="left:1618.5px;top:250.5px;width:20px;height:20px;background:#fff;border:2px solid #33373b;border-radius:50%;"></div>
<span class="t" id="t230" style="left:1649.00px;top:254.60px;font-size:14.3px;color:#212529;transform:scaleX(0.8924);transform-origin:left center;">Dec</span>
<div class="b" style="left:1618.5px;top:273.5px;width:20px;height:20px;background:#1f6b96;border:2px solid #8f9295;border-radius:50%;"></div><div class="b" style="left:1626.5px;top:281.5px;width:4px;height:4px;background:#fff;border-radius:50%;"></div>
<span class="t" id="t231" style="left:1649.00px;top:277.60px;font-size:14.3px;color:#212529;transform:scaleX(0.8725);transform-origin:left center;">Feb</span>
<div class="b" style="left:1618.5px;top:296.5px;width:20px;height:20px;background:#fff;border:2px solid #33373b;border-radius:50%;"></div>
<span class="t" id="t232" style="left:1649.00px;top:300.60px;font-size:14.3px;color:#212529;transform:scaleX(0.8752);transform-origin:left center;">Jul</span>
<div class="b" style="left:1618.5px;top:319.5px;width:20px;height:20px;background:#fff;border:2px solid #33373b;border-radius:50%;"></div>
<span class="t" id="t233" style="left:1649.00px;top:323.60px;font-size:14.3px;color:#212529;transform:scaleX(0.9322);transform-origin:left center;">Jan</span>
<div class="b" style="left:1619px;top:356px;width:71px;height:32px;background:#1f6b96;border-radius:6px;"></div><span class="t" id="t234" style="left:1635.00px;top:363.83px;font-size:16.5px;color:#fff;transform:scaleX(0.9047);transform-origin:left center;">Score</span>
<div class="b" style="left:1619px;top:398px;width:257px;height:50px;background:#e6e7ea;border-radius:4px;"></div><svg class="b" style="left:1632px;top:414px;" width="19" height="16" viewBox="0 0 19 16"><path d="M1 9 L6 14.5 L17.5 1" fill="none" stroke="#157a1c" stroke-width="2.2"/></svg><span class="t" id="t235" style="left:1661.00px;top:415.90px;font-size:14.3px;color:#157a1c;transform:scaleX(0.9441);transform-origin:left center;">Correct!</span>
<div class="b" style="left:1566px;top:473px;width:17px;height:17px;background:#1f6b96;border-radius:1px;"></div><svg class="b" style="left:1566px;top:473px;" width="17" height="17" viewBox="0 0 17 17"><path d="M3.5 8.5 L7 12 L13.5 4.5" fill="none" stroke="#fff" stroke-width="1.8"/></svg>
<span class="t" id="t236" style="left:1603.50px;top:474.70px;font-size:14.3px;color:#212529;transform:scaleX(0.9579);transform-origin:left center;">8. Which months did not have an increase in</span>
<span class="t" id="t237" style="left:1619.00px;top:494.60px;font-size:14.3px;color:#212529;transform:scaleX(0.9487);transform-origin:left center;">the year 2013?</span>
<div class="b" style="left:1618.5px;top:524.7px;width:20px;height:20px;background:#1f6b96;border:2px solid #8f9295;border-radius:4px;"></div><div class="b" style="left:1626.5px;top:532.7px;width:4px;height:4px;background:#fff;border-radius:50%;"></div>
<span class="t" id="t238" style="left:1649.00px;top:528.80px;font-size:14.3px;color:#212529;transform:scaleX(0.9322);transform-origin:left center;">Jan</span>
<div class="b" style="left:1618.5px;top:547.7px;width:20px;height:20px;background:#fff;border:2px solid #33373b;border-radius:4px;"></div>
<span class="t" id="t239" style="left:1649.00px;top:551.80px;font-size:14.3px;color:#212529;transform:scaleX(0.8725);transform-origin:left center;">Feb</span>
<div class="b" style="left:1618.5px;top:570.7px;width:20px;height:20px;background:#fff;border:2px solid #33373b;border-radius:4px;"></div>
<span class="t" id="t240" style="left:1649.00px;top:574.80px;font-size:14.3px;color:#212529;transform:scaleX(0.9322);transform-origin:left center;">Jun</span>
<div class="b" style="left:1618.5px;top:593.7px;width:20px;height:20px;background:#fff;border:2px solid #33373b;border-radius:4px;"></div>
<span class="t" id="t241" style="left:1649.00px;top:597.80px;font-size:14.3px;color:#212529;transform:scaleX(0.8752);transform-origin:left center;">Jul</span>
<div class="b" style="left:1618.5px;top:616.7px;width:20px;height:20px;background:#1f6b96;border:2px solid #8f9295;border-radius:4px;"></div><div class="b" style="left:1626.5px;top:624.7px;width:4px;height:4px;background:#fff;border-radius:50%;"></div>
<span class="t" id="t242" style="left:1649.00px;top:620.80px;font-size:14.3px;color:#212529;transform:scaleX(0.8924);transform-origin:left center;">Dec</span>
<div class="b" style="left:1619px;top:653px;width:71px;height:32px;background:#1f6b96;border-radius:6px;"></div><span class="t" id="t243" style="left:1635.00px;top:660.83px;font-size:16.5px;color:#fff;transform:scaleX(0.9047);transform-origin:left center;">Score</span>
<div class="b" style="left:1619px;top:695px;width:257px;height:50px;background:#e6e7ea;border-radius:4px;"></div><svg class="b" style="left:1632px;top:711px;" width="19" height="16" viewBox="0 0 19 16"><path d="M1 9 L6 14.5 L17.5 1" fill="none" stroke="#157a1c" stroke-width="2.2"/></svg><span class="t" id="t244" style="left:1661.00px;top:712.90px;font-size:14.3px;color:#157a1c;transform:scaleX(0.9441);transform-origin:left center;">Correct!</span>
<div class="b" style="left:1566px;top:770px;width:326px;height:2px;background:#85888c;"></div>
<span class="t" id="t245" style="left:1566.00px;top:792.48px;font-size:24px;color:#16181b;transform:scaleX(0.9735);transform-origin:left center;">Check your work</span>
<div class="b" style="left:1553px;top:823px;width:366px;height:1px;background:#d5d7da;"></div>
<div class="b" style="left:1553px;top:824px;width:366px;height:98px;background:#fff;"></div>
<div class="b" style="left:1566px;top:840px;width:161px;height:30px;background:#fff;border:1px solid #1f6b96;border-radius:4px;"></div>
<svg class="b" style="left:1576px;top:849px;" width="17" height="12" viewBox="0 0 17 12"><path d="M16.5 6 H2.5" stroke="#1f6b96" stroke-width="1.6"/><path d="M7 1.2 L1 6 L7 10.8 Z" fill="#1f6b96"/></svg>
<span class="t" id="t246" style="left:1616.70px;top:846.63px;font-size:16.5px;color:#1f6b96;transform:scaleX(0.9190);transform-origin:left center;">Previous</span>
<div class="b" style="left:1743px;top:840px;width:161px;height:30px;background:#fff;border:1px solid #1f6b96;border-radius:4px;"></div>
<span class="t" id="t247" style="left:1807.00px;top:846.63px;font-size:16.5px;color:#1f6b96;transform:scaleX(0.9576);transform-origin:left center;">Next</span>
<svg class="b" style="left:1878px;top:849px;" width="17" height="12" viewBox="0 0 17 12"><path d="M0.5 6 H14.5" stroke="#1f6b96" stroke-width="1.6"/><path d="M10 1.2 L16 6 L10 10.8 Z" fill="#1f6b96"/></svg>
<div class="b" style="left:1566px;top:894px;width:187px;height:8px;background:#d9dadb;border-radius:4px;"></div>
<div class="b" style="left:1566px;top:894px;width:161px;height:8px;background:#3d4045;border-radius:4px;"></div>
<span class="t" id="t248" style="left:1769.00px;top:890.90px;font-size:14.3px;color:#212529;transform:scaleX(0.9455);transform-origin:left center;">22 Minutes Remaining</span>
</body></html>
